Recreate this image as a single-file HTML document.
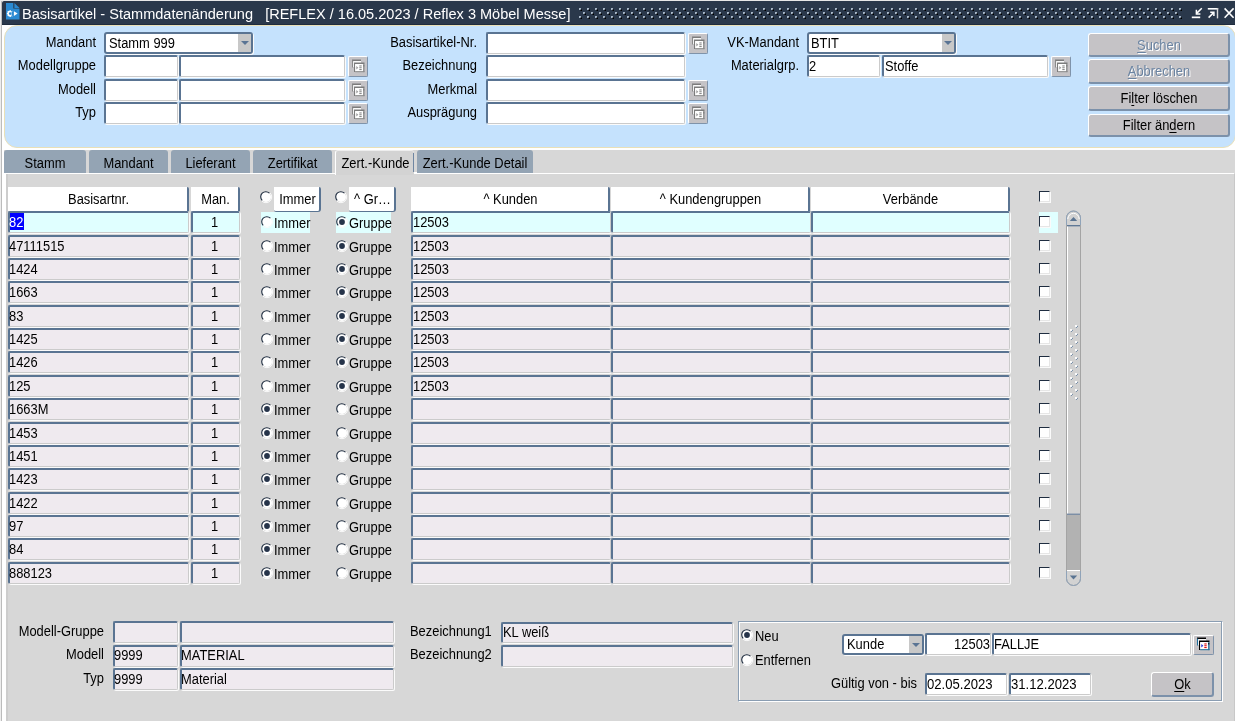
<!DOCTYPE html><html><head><meta charset="utf-8"><style>
html,body{margin:0;padding:0;}
body{width:1235px;height:721px;overflow:hidden;position:relative;background:#d6d6d6;font-family:"Liberation Sans",sans-serif;}
#root{position:absolute;left:0;top:0;width:1235px;height:721px;overflow:hidden;background:#fff;will-change:transform;}
.t{position:absolute;white-space:nowrap;line-height:1;}
.b{position:absolute;box-sizing:border-box;}
u{text-decoration:underline;text-decoration-thickness:1px;text-underline-offset:1.5px;}
</style></head><body><div id="root">
<div class="b" style="left:0px;top:0px;width:1px;height:721px;background:#ededed;"></div>
<div class="b" style="left:1px;top:0px;width:1px;height:721px;background:#bcbcbc;"></div>
<div class="b" style="left:0px;top:0px;width:1235px;height:1px;background:#e8e8e8;"></div>
<div class="b" style="left:2px;top:1px;width:1233px;height:24px;background:#2a384b;border-top-left-radius:2px;border-bottom:1px solid #1f2c3e;"></div>
<svg class="b" style="left:6px;top:3px" width="14" height="17" viewBox="0 0 14 17">
<path d="M0 0 H7.3 V5.6 H13.5 V16.5 H0 Z" fill="#2a8ad2"/>
<path d="M8.4 0 L13.5 5 H8.4 Z" fill="#2a8ad2"/>
<circle cx="4.2" cy="10.6" r="2.1" stroke="#fff" stroke-width="1.5" fill="none"/>
<path d="M4.2 7.2 V8.3 M4.2 12.9 V14 M0.9 10.6 H2 M1.8 8.2 L2.6 9 M1.8 13 L2.6 12.2 M6.6 8.2 L5.8 9 M6.6 13 L5.8 12.2" stroke="#fff" stroke-width="1.3"/>
<rect x="5.6" y="8.3" width="1.6" height="4.6" fill="#2a8ad2"/>
<path d="M7.9 8.2 L11.6 10.6 L7.9 13 Z" fill="#fff"/>
</svg>
<div class="t" style="left:22.00px;transform-origin:0 0;top:6px;font-size:15.3px;color:#fff;transform:scaleX(0.95);">Basisartikel - Stammdatenänderung&nbsp;&nbsp; [REFLEX / 16.05.2023 / Reflex 3 Möbel Messe]</div>
<svg class="b" style="left:579px;top:8px" width="606" height="12">
<defs><pattern id="dp" x="0" y="0" width="8" height="8" patternUnits="userSpaceOnUse">
<rect x="0" y="0" width="2" height="2" fill="#a9b8c8"/><rect x="1.5" y="1.5" width="1.5" height="1.5" fill="#000"/>
<rect x="4" y="4" width="2" height="2" fill="#a9b8c8"/><rect x="5.5" y="5.5" width="1.5" height="1.5" fill="#000"/>
</pattern></defs><rect x="0" y="0" width="604" height="12" fill="url(#dp)"/></svg>
<svg class="b" style="left:1190px;top:6px" width="45" height="14" viewBox="0 0 45 14">
<rect x="1.8" y="10.5" width="8.4" height="1.7" fill="#fff"/>
<path d="M11.8 2.2 L6.6 7.4" stroke="#fff" stroke-width="1.5"/>
<path d="M6.4 3.8 V8 H10.4" stroke="#fff" stroke-width="1.5" fill="none"/>
<rect x="17.8" y="2" width="10.4" height="1.6" fill="#fff"/>
<rect x="26.8" y="2" width="1.4" height="10.4" fill="#d8d8d8"/>
<path d="M18.6 11.6 L23.6 6.6" stroke="#fff" stroke-width="1.5"/>
<path d="M20.2 6.3 H23.9 V10" stroke="#fff" stroke-width="1.5" fill="none"/>
<path d="M34.6 2.4 L43.6 11.8 M43.6 2.4 L34.6 11.8" stroke="#fff" stroke-width="1.6"/>
</svg>
<div class="b" style="left:4px;top:25px;width:1232px;height:123px;background:#c5e2fd;border:1px solid #e9e0b8;border-radius:13px;"></div>
<div class="t" style="left:-24.00px;width:120px;text-align:right;transform-origin:100% 0;top:36px;font-size:13.8px;color:#000;transform:scaleX(0.935);">Mandant</div>
<div class="t" style="left:-24.00px;width:120px;text-align:right;transform-origin:100% 0;top:59px;font-size:13.8px;color:#000;transform:scaleX(0.935);">Modellgruppe</div>
<div class="t" style="left:-24.00px;width:120px;text-align:right;transform-origin:100% 0;top:83px;font-size:13.8px;color:#000;transform:scaleX(0.935);">Modell</div>
<div class="t" style="left:-24.00px;width:120px;text-align:right;transform-origin:100% 0;top:106px;font-size:13.8px;color:#000;transform:scaleX(0.935);">Typ</div>
<div class="b" style="left:104px;top:32px;width:149px;height:22px;background:#fff;border:2px solid #5a7492;border-radius:3px;box-shadow:1px 1px 0 #fbfbfb;"></div>
<div class="b" style="left:238px;top:34px;width:13px;height:18px;background:#c8c8c8;"></div>
<svg class="b" style="left:239.70px;top:40.00px" width="10" height="6"><path d="M1 1 L9 1 L5 5 Z" fill="#5a7494"/></svg>
<div class="t" style="left:108.50px;transform-origin:0 0;top:37px;font-size:13.8px;color:#000;transform:scaleX(0.935);">Stamm 999</div>
<div class="b" style="left:104px;top:55px;width:74px;height:22px;background:#fff;border-top:2px solid #5a7492;border-left:2px solid #5a7492;border-right:1px solid #cbcbcb;border-bottom:1px solid #cbcbcb;border-radius:2px;box-shadow:1px 1px 0 #fbfbfb;"></div>
<div class="b" style="left:179px;top:55px;width:166px;height:22px;background:#fff;border-top:2px solid #5a7492;border-left:2px solid #5a7492;border-right:1px solid #cbcbcb;border-bottom:1px solid #cbcbcb;border-radius:2px;box-shadow:1px 1px 0 #fbfbfb;"></div>
<div class="b" style="left:348px;top:56px;width:20px;height:21px;background:#c5c3c6;border-top:1px solid #fff;border-left:1px solid #fff;border-right:1px solid #7f93aa;border-bottom:1px solid #7f93aa;border-radius:2px;"></div>
<svg class="b" style="left:351.50px;top:59.00px" width="14" height="14" viewBox="0 0 14 14">
<rect x="0" y="0.5" width="9" height="1.6" fill="#7c7c7c"/>
<rect x="0" y="1.5" width="1.2" height="7" fill="#8a8a8a"/>
<rect x="1.2" y="2.1" width="7.8" height="6" fill="#fff"/>
<rect x="2" y="3.5" width="10.5" height="1.6" fill="#7c7c7c"/>
<rect x="2" y="4" width="1.2" height="9" fill="#7c7c7c"/>
<rect x="3.2" y="5.1" width="8" height="7.2" fill="#fff"/>
<rect x="11.2" y="5.1" width="1.3" height="8" fill="#8a8a8a"/>
<rect x="3.2" y="12.2" width="9.3" height="1" fill="#8a8a8a"/>
<rect x="11.3" y="6" width="1" height="1.5" fill="#7c7c7c"/>
<path d="M4.3 7 L6.3 8.7 L4.3 10.4 Z" fill="#9a9a9a"/>
<rect x="7.3" y="6.4" width="2.4" height="1.1" fill="#8a8a8a"/>
<rect x="7.3" y="8.2" width="2.4" height="1.1" fill="#8a8a8a"/>
<rect x="7.3" y="10" width="2.4" height="1.1" fill="#8a8a8a"/>
</svg>
<div class="b" style="left:104px;top:79px;width:74px;height:22px;background:#fff;border-top:2px solid #5a7492;border-left:2px solid #5a7492;border-right:1px solid #cbcbcb;border-bottom:1px solid #cbcbcb;border-radius:2px;box-shadow:1px 1px 0 #fbfbfb;"></div>
<div class="b" style="left:179px;top:79px;width:166px;height:22px;background:#fff;border-top:2px solid #5a7492;border-left:2px solid #5a7492;border-right:1px solid #cbcbcb;border-bottom:1px solid #cbcbcb;border-radius:2px;box-shadow:1px 1px 0 #fbfbfb;"></div>
<div class="b" style="left:348px;top:80px;width:20px;height:21px;background:#c5c3c6;border-top:1px solid #fff;border-left:1px solid #fff;border-right:1px solid #7f93aa;border-bottom:1px solid #7f93aa;border-radius:2px;"></div>
<svg class="b" style="left:351.50px;top:83.00px" width="14" height="14" viewBox="0 0 14 14">
<rect x="0" y="0.5" width="9" height="1.6" fill="#7c7c7c"/>
<rect x="0" y="1.5" width="1.2" height="7" fill="#8a8a8a"/>
<rect x="1.2" y="2.1" width="7.8" height="6" fill="#fff"/>
<rect x="2" y="3.5" width="10.5" height="1.6" fill="#7c7c7c"/>
<rect x="2" y="4" width="1.2" height="9" fill="#7c7c7c"/>
<rect x="3.2" y="5.1" width="8" height="7.2" fill="#fff"/>
<rect x="11.2" y="5.1" width="1.3" height="8" fill="#8a8a8a"/>
<rect x="3.2" y="12.2" width="9.3" height="1" fill="#8a8a8a"/>
<rect x="11.3" y="6" width="1" height="1.5" fill="#7c7c7c"/>
<path d="M4.3 7 L6.3 8.7 L4.3 10.4 Z" fill="#9a9a9a"/>
<rect x="7.3" y="6.4" width="2.4" height="1.1" fill="#8a8a8a"/>
<rect x="7.3" y="8.2" width="2.4" height="1.1" fill="#8a8a8a"/>
<rect x="7.3" y="10" width="2.4" height="1.1" fill="#8a8a8a"/>
</svg>
<div class="b" style="left:104px;top:102px;width:74px;height:22px;background:#fff;border-top:2px solid #5a7492;border-left:2px solid #5a7492;border-right:1px solid #cbcbcb;border-bottom:1px solid #cbcbcb;border-radius:2px;box-shadow:1px 1px 0 #fbfbfb;"></div>
<div class="b" style="left:179px;top:102px;width:166px;height:22px;background:#fff;border-top:2px solid #5a7492;border-left:2px solid #5a7492;border-right:1px solid #cbcbcb;border-bottom:1px solid #cbcbcb;border-radius:2px;box-shadow:1px 1px 0 #fbfbfb;"></div>
<div class="b" style="left:348px;top:103px;width:20px;height:21px;background:#c5c3c6;border-top:1px solid #fff;border-left:1px solid #fff;border-right:1px solid #7f93aa;border-bottom:1px solid #7f93aa;border-radius:2px;"></div>
<svg class="b" style="left:351.50px;top:106.00px" width="14" height="14" viewBox="0 0 14 14">
<rect x="0" y="0.5" width="9" height="1.6" fill="#7c7c7c"/>
<rect x="0" y="1.5" width="1.2" height="7" fill="#8a8a8a"/>
<rect x="1.2" y="2.1" width="7.8" height="6" fill="#fff"/>
<rect x="2" y="3.5" width="10.5" height="1.6" fill="#7c7c7c"/>
<rect x="2" y="4" width="1.2" height="9" fill="#7c7c7c"/>
<rect x="3.2" y="5.1" width="8" height="7.2" fill="#fff"/>
<rect x="11.2" y="5.1" width="1.3" height="8" fill="#8a8a8a"/>
<rect x="3.2" y="12.2" width="9.3" height="1" fill="#8a8a8a"/>
<rect x="11.3" y="6" width="1" height="1.5" fill="#7c7c7c"/>
<path d="M4.3 7 L6.3 8.7 L4.3 10.4 Z" fill="#9a9a9a"/>
<rect x="7.3" y="6.4" width="2.4" height="1.1" fill="#8a8a8a"/>
<rect x="7.3" y="8.2" width="2.4" height="1.1" fill="#8a8a8a"/>
<rect x="7.3" y="10" width="2.4" height="1.1" fill="#8a8a8a"/>
</svg>
<div class="t" style="left:357.00px;width:120px;text-align:right;transform-origin:100% 0;top:36px;font-size:13.8px;color:#000;transform:scaleX(0.935);">Basisartikel-Nr.</div>
<div class="t" style="left:357.00px;width:120px;text-align:right;transform-origin:100% 0;top:59px;font-size:13.8px;color:#000;transform:scaleX(0.935);">Bezeichnung</div>
<div class="t" style="left:357.00px;width:120px;text-align:right;transform-origin:100% 0;top:83px;font-size:13.8px;color:#000;transform:scaleX(0.935);">Merkmal</div>
<div class="t" style="left:357.00px;width:120px;text-align:right;transform-origin:100% 0;top:106px;font-size:13.8px;color:#000;transform:scaleX(0.935);">Ausprägung</div>
<div class="b" style="left:486px;top:32px;width:199px;height:22px;background:#fff;border-top:2px solid #5a7492;border-left:2px solid #5a7492;border-right:1px solid #cbcbcb;border-bottom:1px solid #cbcbcb;border-radius:2px;box-shadow:1px 1px 0 #fbfbfb;"></div>
<div class="b" style="left:486px;top:55px;width:199px;height:22px;background:#fff;border-top:2px solid #5a7492;border-left:2px solid #5a7492;border-right:1px solid #cbcbcb;border-bottom:1px solid #cbcbcb;border-radius:2px;box-shadow:1px 1px 0 #fbfbfb;"></div>
<div class="b" style="left:486px;top:79px;width:199px;height:22px;background:#fff;border-top:2px solid #5a7492;border-left:2px solid #5a7492;border-right:1px solid #cbcbcb;border-bottom:1px solid #cbcbcb;border-radius:2px;box-shadow:1px 1px 0 #fbfbfb;"></div>
<div class="b" style="left:486px;top:102px;width:199px;height:22px;background:#fff;border-top:2px solid #5a7492;border-left:2px solid #5a7492;border-right:1px solid #cbcbcb;border-bottom:1px solid #cbcbcb;border-radius:2px;box-shadow:1px 1px 0 #fbfbfb;"></div>
<div class="b" style="left:688px;top:33px;width:20px;height:21px;background:#c5c3c6;border-top:1px solid #fff;border-left:1px solid #fff;border-right:1px solid #7f93aa;border-bottom:1px solid #7f93aa;border-radius:2px;"></div>
<svg class="b" style="left:691.50px;top:36.00px" width="14" height="14" viewBox="0 0 14 14">
<rect x="0" y="0.5" width="9" height="1.6" fill="#7c7c7c"/>
<rect x="0" y="1.5" width="1.2" height="7" fill="#8a8a8a"/>
<rect x="1.2" y="2.1" width="7.8" height="6" fill="#fff"/>
<rect x="2" y="3.5" width="10.5" height="1.6" fill="#7c7c7c"/>
<rect x="2" y="4" width="1.2" height="9" fill="#7c7c7c"/>
<rect x="3.2" y="5.1" width="8" height="7.2" fill="#fff"/>
<rect x="11.2" y="5.1" width="1.3" height="8" fill="#8a8a8a"/>
<rect x="3.2" y="12.2" width="9.3" height="1" fill="#8a8a8a"/>
<rect x="11.3" y="6" width="1" height="1.5" fill="#7c7c7c"/>
<path d="M4.3 7 L6.3 8.7 L4.3 10.4 Z" fill="#9a9a9a"/>
<rect x="7.3" y="6.4" width="2.4" height="1.1" fill="#8a8a8a"/>
<rect x="7.3" y="8.2" width="2.4" height="1.1" fill="#8a8a8a"/>
<rect x="7.3" y="10" width="2.4" height="1.1" fill="#8a8a8a"/>
</svg>
<div class="b" style="left:688px;top:80px;width:20px;height:21px;background:#c5c3c6;border-top:1px solid #fff;border-left:1px solid #fff;border-right:1px solid #7f93aa;border-bottom:1px solid #7f93aa;border-radius:2px;"></div>
<svg class="b" style="left:691.50px;top:83.00px" width="14" height="14" viewBox="0 0 14 14">
<rect x="0" y="0.5" width="9" height="1.6" fill="#7c7c7c"/>
<rect x="0" y="1.5" width="1.2" height="7" fill="#8a8a8a"/>
<rect x="1.2" y="2.1" width="7.8" height="6" fill="#fff"/>
<rect x="2" y="3.5" width="10.5" height="1.6" fill="#7c7c7c"/>
<rect x="2" y="4" width="1.2" height="9" fill="#7c7c7c"/>
<rect x="3.2" y="5.1" width="8" height="7.2" fill="#fff"/>
<rect x="11.2" y="5.1" width="1.3" height="8" fill="#8a8a8a"/>
<rect x="3.2" y="12.2" width="9.3" height="1" fill="#8a8a8a"/>
<rect x="11.3" y="6" width="1" height="1.5" fill="#7c7c7c"/>
<path d="M4.3 7 L6.3 8.7 L4.3 10.4 Z" fill="#9a9a9a"/>
<rect x="7.3" y="6.4" width="2.4" height="1.1" fill="#8a8a8a"/>
<rect x="7.3" y="8.2" width="2.4" height="1.1" fill="#8a8a8a"/>
<rect x="7.3" y="10" width="2.4" height="1.1" fill="#8a8a8a"/>
</svg>
<div class="b" style="left:688px;top:103px;width:20px;height:21px;background:#c5c3c6;border-top:1px solid #fff;border-left:1px solid #fff;border-right:1px solid #7f93aa;border-bottom:1px solid #7f93aa;border-radius:2px;"></div>
<svg class="b" style="left:691.50px;top:106.00px" width="14" height="14" viewBox="0 0 14 14">
<rect x="0" y="0.5" width="9" height="1.6" fill="#7c7c7c"/>
<rect x="0" y="1.5" width="1.2" height="7" fill="#8a8a8a"/>
<rect x="1.2" y="2.1" width="7.8" height="6" fill="#fff"/>
<rect x="2" y="3.5" width="10.5" height="1.6" fill="#7c7c7c"/>
<rect x="2" y="4" width="1.2" height="9" fill="#7c7c7c"/>
<rect x="3.2" y="5.1" width="8" height="7.2" fill="#fff"/>
<rect x="11.2" y="5.1" width="1.3" height="8" fill="#8a8a8a"/>
<rect x="3.2" y="12.2" width="9.3" height="1" fill="#8a8a8a"/>
<rect x="11.3" y="6" width="1" height="1.5" fill="#7c7c7c"/>
<path d="M4.3 7 L6.3 8.7 L4.3 10.4 Z" fill="#9a9a9a"/>
<rect x="7.3" y="6.4" width="2.4" height="1.1" fill="#8a8a8a"/>
<rect x="7.3" y="8.2" width="2.4" height="1.1" fill="#8a8a8a"/>
<rect x="7.3" y="10" width="2.4" height="1.1" fill="#8a8a8a"/>
</svg>
<div class="t" style="left:678.80px;width:120px;text-align:right;transform-origin:100% 0;top:36px;font-size:13.8px;color:#000;transform:scaleX(0.935);">VK-Mandant</div>
<div class="t" style="left:678.80px;width:120px;text-align:right;transform-origin:100% 0;top:59px;font-size:13.8px;color:#000;transform:scaleX(0.935);">Materialgrp.</div>
<div class="b" style="left:807px;top:32px;width:149px;height:22px;background:#fff;border:2px solid #5a7492;border-radius:3px;box-shadow:1px 1px 0 #fbfbfb;"></div>
<div class="b" style="left:942px;top:34px;width:12px;height:18px;background:#c8c8c8;"></div>
<svg class="b" style="left:943.20px;top:40.00px" width="10" height="6"><path d="M1 1 L9 1 L5 5 Z" fill="#5a7494"/></svg>
<div class="t" style="left:811.00px;transform-origin:0 0;top:37px;font-size:13.8px;color:#000;transform:scaleX(0.935);">BTIT</div>
<div class="b" style="left:807px;top:55px;width:73px;height:22px;background:#fff;border-top:2px solid #5a7492;border-left:2px solid #5a7492;border-right:1px solid #cbcbcb;border-bottom:1px solid #cbcbcb;border-radius:2px;box-shadow:1px 1px 0 #fbfbfb;"></div>
<div class="t" style="left:808.50px;transform-origin:0 0;top:60px;font-size:13.8px;color:#000;transform:scaleX(0.935);">2</div>
<div class="b" style="left:882px;top:55px;width:166px;height:22px;background:#fff;border-top:2px solid #5a7492;border-left:2px solid #5a7492;border-right:1px solid #cbcbcb;border-bottom:1px solid #cbcbcb;border-radius:2px;box-shadow:1px 1px 0 #fbfbfb;"></div>
<div class="t" style="left:884.50px;transform-origin:0 0;top:60px;font-size:13.8px;color:#000;transform:scaleX(0.935);">Stoffe</div>
<div class="b" style="left:1051px;top:56px;width:20px;height:21px;background:#c5c3c6;border-top:1px solid #fff;border-left:1px solid #fff;border-right:1px solid #7f93aa;border-bottom:1px solid #7f93aa;border-radius:2px;"></div>
<svg class="b" style="left:1054.50px;top:59.00px" width="14" height="14" viewBox="0 0 14 14">
<rect x="0" y="0.5" width="9" height="1.6" fill="#7c7c7c"/>
<rect x="0" y="1.5" width="1.2" height="7" fill="#8a8a8a"/>
<rect x="1.2" y="2.1" width="7.8" height="6" fill="#fff"/>
<rect x="2" y="3.5" width="10.5" height="1.6" fill="#7c7c7c"/>
<rect x="2" y="4" width="1.2" height="9" fill="#7c7c7c"/>
<rect x="3.2" y="5.1" width="8" height="7.2" fill="#fff"/>
<rect x="11.2" y="5.1" width="1.3" height="8" fill="#8a8a8a"/>
<rect x="3.2" y="12.2" width="9.3" height="1" fill="#8a8a8a"/>
<rect x="11.3" y="6" width="1" height="1.5" fill="#7c7c7c"/>
<path d="M4.3 7 L6.3 8.7 L4.3 10.4 Z" fill="#9a9a9a"/>
<rect x="7.3" y="6.4" width="2.4" height="1.1" fill="#8a8a8a"/>
<rect x="7.3" y="8.2" width="2.4" height="1.1" fill="#8a8a8a"/>
<rect x="7.3" y="10" width="2.4" height="1.1" fill="#8a8a8a"/>
</svg>
<div class="b" style="left:1088px;top:33px;width:142px;height:24px;background:#c5c3c6;border-top:1px solid #fff;border-left:1px solid #fff;border-right:2px solid #7c91aa;border-bottom:2px solid #7c91aa;border-radius:3px;"></div>
<div class="t" style="left:1089.00px;width:142.00px;text-align:center;transform-origin:50% 0;top:40px;font-size:13.8px;color:#fff;transform:scaleX(0.935);"><u>S</u>uchen</div>
<div class="t" style="left:1088.00px;width:142.00px;text-align:center;transform-origin:50% 0;top:39px;font-size:13.8px;color:#6b84a2;transform:scaleX(0.935);"><u>S</u>uchen</div>
<div class="b" style="left:1088px;top:59px;width:142px;height:25px;background:#c5c3c6;border-top:1px solid #fff;border-left:1px solid #fff;border-right:2px solid #7c91aa;border-bottom:2px solid #7c91aa;border-radius:3px;"></div>
<div class="t" style="left:1089.00px;width:142.00px;text-align:center;transform-origin:50% 0;top:66px;font-size:13.8px;color:#fff;transform:scaleX(0.935);"><u>A</u>bbrechen</div>
<div class="t" style="left:1088.00px;width:142.00px;text-align:center;transform-origin:50% 0;top:65px;font-size:13.8px;color:#6b84a2;transform:scaleX(0.935);"><u>A</u>bbrechen</div>
<div class="b" style="left:1088px;top:86px;width:142px;height:25px;background:#c5c3c6;border-top:1px solid #fff;border-left:1px solid #fff;border-right:2px solid #7c91aa;border-bottom:2px solid #7c91aa;border-radius:3px;"></div>
<div class="t" style="left:1088.00px;width:142.00px;text-align:center;transform-origin:50% 0;top:92px;font-size:13.8px;color:#000;transform:scaleX(0.935);">Fi<u>l</u>ter löschen</div>
<div class="b" style="left:1088px;top:114px;width:142px;height:23px;background:#c5c3c6;border-top:1px solid #fff;border-left:1px solid #fff;border-right:2px solid #7c91aa;border-bottom:2px solid #7c91aa;border-radius:3px;"></div>
<div class="t" style="left:1088.00px;width:142.00px;text-align:center;transform-origin:50% 0;top:119px;font-size:13.8px;color:#000;transform:scaleX(0.935);">Filter än<u>d</u>ern</div>
<div class="b" style="left:4px;top:150px;width:1231px;height:571px;background:#d7d7d7;"></div>
<div class="b" style="left:4px;top:173px;width:1230px;height:1px;background:#fff;"></div>
<div class="b" style="left:4px;top:173px;width:2px;height:548px;background:#fff;"></div>
<div class="b" style="left:6px;top:174px;width:2px;height:547px;background:#cdcdcd;"></div>
<div class="b" style="left:1234px;top:174px;width:1px;height:547px;background:#c8c8c8;"></div>
<div class="b" style="left:4px;top:150px;width:82px;height:23px;background:#94a4b4;border-radius:3px 3px 0 0;"></div>
<div class="t" style="left:4.00px;width:82.00px;text-align:center;transform-origin:50% 0;top:157px;font-size:13.8px;color:#000;transform:scaleX(0.935);">Stamm</div>
<div class="b" style="left:89px;top:150px;width:79px;height:23px;background:#94a4b4;border-radius:3px 3px 0 0;"></div>
<div class="t" style="left:89.00px;width:79.00px;text-align:center;transform-origin:50% 0;top:157px;font-size:13.8px;color:#000;transform:scaleX(0.935);">Mandant</div>
<div class="b" style="left:171px;top:150px;width:79px;height:23px;background:#94a4b4;border-radius:3px 3px 0 0;"></div>
<div class="t" style="left:171.00px;width:79.00px;text-align:center;transform-origin:50% 0;top:157px;font-size:13.8px;color:#000;transform:scaleX(0.935);">Lieferant</div>
<div class="b" style="left:253px;top:150px;width:79px;height:23px;background:#94a4b4;border-radius:3px 3px 0 0;"></div>
<div class="t" style="left:253.00px;width:79.00px;text-align:center;transform-origin:50% 0;top:157px;font-size:13.8px;color:#000;transform:scaleX(0.935);">Zertifikat</div>
<div class="b" style="left:335px;top:150px;width:79px;height:25px;background:#d3d3d3;border-left:1px solid #fff;border-top:1px solid #eeeeee;border-radius:3px 3px 0 0;"></div>
<div class="b" style="left:413px;top:153px;width:1px;height:19px;background:#6f86a2;"></div>
<div class="b" style="left:414px;top:172px;width:3px;height:2px;background:#fff;"></div>
<div class="t" style="left:335.50px;width:79.00px;text-align:center;transform-origin:50% 0;top:157px;font-size:13.8px;color:#000;transform:scaleX(0.935);">Zert.-Kunde</div>
<div class="b" style="left:417px;top:150px;width:116px;height:23px;background:#94a4b4;border-radius:3px 3px 0 0;"></div>
<div class="t" style="left:417.00px;width:116.00px;text-align:center;transform-origin:50% 0;top:157px;font-size:13.8px;color:#000;transform:scaleX(0.935);">Zert.-Kunde Detail</div>
<div class="b" style="left:8px;top:187px;width:181px;height:24px;background:#fff;border-right:2px solid #5a7492;border-bottom:0;border-radius:0 2px 0 0;"></div>
<div class="t" style="left:8.00px;width:181.00px;text-align:center;transform-origin:50% 0;top:193px;font-size:13.8px;color:#000;transform:scaleX(0.935);">Basisartnr.</div>
<div class="b" style="left:191px;top:187px;width:49px;height:24px;background:#fff;border-right:2px solid #5a7492;border-bottom:0;border-radius:0 2px 0 0;"></div>
<div class="t" style="left:191.00px;width:49.00px;text-align:center;transform-origin:50% 0;top:193px;font-size:13.8px;color:#000;transform:scaleX(0.935);">Man.</div>
<svg class="b" style="left:259.00px;top:190.00px" width="14" height="14" viewBox="0 0 14 14">
<circle cx="7" cy="7" r="5" fill="#fff"/>
<path d="M11.1 2.9 A5.8 5.8 0 0 1 2.9 11.1" stroke="#fafafa" stroke-width="1" fill="none"/>
<path d="M3.2 10.4 A5 5 0 0 1 10.4 3.2" stroke="#1f2d40" stroke-width="1.1" fill="none"/>

</svg>
<div class="b" style="left:274px;top:187px;width:47px;height:25px;background:#fff;border-right:2px solid #5a7492;border-bottom:1px solid #5a7492;border-radius:0 2px 3px 2px;"></div>
<div class="t" style="left:274.00px;width:47.00px;text-align:center;transform-origin:50% 0;top:193px;font-size:13.8px;color:#000;transform:scaleX(0.935);">Immer</div>
<svg class="b" style="left:334.00px;top:190.00px" width="14" height="14" viewBox="0 0 14 14">
<circle cx="7" cy="7" r="5" fill="#fff"/>
<path d="M11.1 2.9 A5.8 5.8 0 0 1 2.9 11.1" stroke="#fafafa" stroke-width="1" fill="none"/>
<path d="M3.2 10.4 A5 5 0 0 1 10.4 3.2" stroke="#1f2d40" stroke-width="1.1" fill="none"/>

</svg>
<div class="b" style="left:349px;top:187px;width:47px;height:25px;background:#fff;border-right:2px solid #5a7492;border-bottom:1px solid #5a7492;border-radius:0 2px 3px 2px;"></div>
<div class="t" style="left:349.00px;width:47.00px;text-align:center;transform-origin:50% 0;top:193px;font-size:13.8px;color:#000;transform:scaleX(0.935);">^ Gr…</div>
<div class="b" style="left:411px;top:187px;width:199px;height:24px;background:#fff;border-right:2px solid #5a7492;border-bottom:0;border-radius:0 2px 0 0;"></div>
<div class="t" style="left:411.00px;width:199.00px;text-align:center;transform-origin:50% 0;top:193px;font-size:13.8px;color:#000;transform:scaleX(0.935);">^ Kunden</div>
<div class="b" style="left:611px;top:187px;width:199px;height:24px;background:#fff;border-right:2px solid #5a7492;border-bottom:0;border-radius:0 2px 0 0;"></div>
<div class="t" style="left:611.00px;width:199.00px;text-align:center;transform-origin:50% 0;top:193px;font-size:13.8px;color:#000;transform:scaleX(0.935);">^ Kundengruppen</div>
<div class="b" style="left:811px;top:187px;width:199px;height:24px;background:#fff;border-right:2px solid #5a7492;border-bottom:0;border-radius:0 2px 0 0;"></div>
<div class="t" style="left:811.00px;width:199.00px;text-align:center;transform-origin:50% 0;top:193px;font-size:13.8px;color:#000;transform:scaleX(0.935);">Verbände</div>
<div class="b" style="left:1039px;top:191px;width:11px;height:11px;background:#fff;border-top:1px solid #1f2d40;border-left:1px solid #1f2d40;border-right:1px solid #e6e6e6;border-bottom:1px solid #e6e6e6;box-shadow:1px 1px 0 #fafafa;"></div>
<div class="b" style="left:261px;top:212px;width:49px;height:21px;background:#e0ffff;"></div>
<div class="b" style="left:336px;top:212px;width:55px;height:21px;background:#e0ffff;"></div>
<div class="b" style="left:1039px;top:212px;width:19px;height:21px;background:#e0ffff;"></div>
<div class="b" style="left:8px;top:211px;width:181px;height:22px;background:#e0ffff;border-top:2px solid #5a7492;border-left:2px solid #5a7492;border-right:1px solid #cbcbcb;border-bottom:1px solid #cbcbcb;border-radius:2px;box-shadow:1px 1px 0 #fbfbfb;"></div>
<div class="b" style="left:10px;top:213px;width:14px;height:17px;background:#0000ff;"></div>
<div class="t" style="left:9.30px;transform-origin:0 0;top:216px;font-size:13.8px;color:#fff;transform:scaleX(0.935);">82</div>
<div class="b" style="left:191px;top:211px;width:49px;height:22px;background:#e0ffff;border-top:2px solid #5a7492;border-left:2px solid #5a7492;border-right:1px solid #cbcbcb;border-bottom:1px solid #cbcbcb;border-radius:2px;box-shadow:1px 1px 0 #fbfbfb;"></div>
<div class="t" style="left:189.50px;width:49.00px;text-align:center;transform-origin:50% 0;top:216px;font-size:13.8px;color:#000;transform:scaleX(0.935);">1</div>
<svg class="b" style="left:259.50px;top:215.30px" width="14" height="14" viewBox="0 0 14 14">
<circle cx="7" cy="7" r="5" fill="#fff"/>
<path d="M11.1 2.9 A5.8 5.8 0 0 1 2.9 11.1" stroke="#fafafa" stroke-width="1" fill="none"/>
<path d="M3.2 10.4 A5 5 0 0 1 10.4 3.2" stroke="#1f2d40" stroke-width="1.1" fill="none"/>

</svg>
<div class="t" style="left:274.20px;transform-origin:0 0;top:217px;font-size:13.8px;color:#000;transform:scaleX(0.935);">Immer</div>
<svg class="b" style="left:334.50px;top:215.30px" width="14" height="14" viewBox="0 0 14 14">
<circle cx="7" cy="7" r="5" fill="#fff"/>
<path d="M11.1 2.9 A5.8 5.8 0 0 1 2.9 11.1" stroke="#fafafa" stroke-width="1" fill="none"/>
<path d="M3.2 10.4 A5 5 0 0 1 10.4 3.2" stroke="#1f2d40" stroke-width="1.1" fill="none"/>
<circle cx="7" cy="7" r="2.9" fill="#26344a"/>
</svg>
<div class="t" style="left:349.00px;transform-origin:0 0;top:217px;font-size:13.8px;color:#000;transform:scaleX(0.935);">Gruppe</div>
<div class="b" style="left:411px;top:211px;width:200px;height:22px;background:#e0ffff;border-top:2px solid #5a7492;border-left:2px solid #5a7492;border-right:1px solid #cbcbcb;border-bottom:1px solid #cbcbcb;border-radius:2px;box-shadow:1px 1px 0 #fbfbfb;"></div>
<div class="t" style="left:412.50px;transform-origin:0 0;top:216px;font-size:13.8px;color:#000;transform:scaleX(0.935);">12503</div>
<div class="b" style="left:611px;top:211px;width:200px;height:22px;background:#e0ffff;border-top:2px solid #5a7492;border-left:2px solid #5a7492;border-right:1px solid #cbcbcb;border-bottom:1px solid #cbcbcb;border-radius:2px;box-shadow:1px 1px 0 #fbfbfb;"></div>
<div class="b" style="left:811px;top:211px;width:199px;height:22px;background:#e0ffff;border-top:2px solid #5a7492;border-left:2px solid #5a7492;border-right:1px solid #cbcbcb;border-bottom:1px solid #cbcbcb;border-radius:2px;box-shadow:1px 1px 0 #fbfbfb;"></div>
<div class="b" style="left:1039px;top:216px;width:11px;height:11px;background:#fff;border-top:1px solid #1f2d40;border-left:1px solid #1f2d40;border-right:1px solid #e6e6e6;border-bottom:1px solid #e6e6e6;box-shadow:1px 1px 0 #fafafa;"></div>
<div class="b" style="left:8px;top:235px;width:181px;height:22px;background:#efeaef;border-top:2px solid #5a7492;border-left:2px solid #5a7492;border-right:1px solid #cbcbcb;border-bottom:1px solid #cbcbcb;border-radius:2px;box-shadow:1px 1px 0 #fbfbfb;"></div>
<div class="t" style="left:9.30px;transform-origin:0 0;top:240px;font-size:13.8px;color:#000;transform:scaleX(0.935);">47111515</div>
<div class="b" style="left:191px;top:235px;width:49px;height:22px;background:#efeaef;border-top:2px solid #5a7492;border-left:2px solid #5a7492;border-right:1px solid #cbcbcb;border-bottom:1px solid #cbcbcb;border-radius:2px;box-shadow:1px 1px 0 #fbfbfb;"></div>
<div class="t" style="left:189.50px;width:49.00px;text-align:center;transform-origin:50% 0;top:240px;font-size:13.8px;color:#000;transform:scaleX(0.935);">1</div>
<svg class="b" style="left:259.50px;top:239.30px" width="14" height="14" viewBox="0 0 14 14">
<circle cx="7" cy="7" r="5" fill="#fff"/>
<path d="M11.1 2.9 A5.8 5.8 0 0 1 2.9 11.1" stroke="#fafafa" stroke-width="1" fill="none"/>
<path d="M3.2 10.4 A5 5 0 0 1 10.4 3.2" stroke="#1f2d40" stroke-width="1.1" fill="none"/>

</svg>
<div class="t" style="left:274.20px;transform-origin:0 0;top:241px;font-size:13.8px;color:#000;transform:scaleX(0.935);">Immer</div>
<svg class="b" style="left:334.50px;top:239.30px" width="14" height="14" viewBox="0 0 14 14">
<circle cx="7" cy="7" r="5" fill="#fff"/>
<path d="M11.1 2.9 A5.8 5.8 0 0 1 2.9 11.1" stroke="#fafafa" stroke-width="1" fill="none"/>
<path d="M3.2 10.4 A5 5 0 0 1 10.4 3.2" stroke="#1f2d40" stroke-width="1.1" fill="none"/>
<circle cx="7" cy="7" r="2.9" fill="#26344a"/>
</svg>
<div class="t" style="left:349.00px;transform-origin:0 0;top:241px;font-size:13.8px;color:#000;transform:scaleX(0.935);">Gruppe</div>
<div class="b" style="left:411px;top:235px;width:200px;height:22px;background:#efeaef;border-top:2px solid #5a7492;border-left:2px solid #5a7492;border-right:1px solid #cbcbcb;border-bottom:1px solid #cbcbcb;border-radius:2px;box-shadow:1px 1px 0 #fbfbfb;"></div>
<div class="t" style="left:412.50px;transform-origin:0 0;top:240px;font-size:13.8px;color:#000;transform:scaleX(0.935);">12503</div>
<div class="b" style="left:611px;top:235px;width:200px;height:22px;background:#efeaef;border-top:2px solid #5a7492;border-left:2px solid #5a7492;border-right:1px solid #cbcbcb;border-bottom:1px solid #cbcbcb;border-radius:2px;box-shadow:1px 1px 0 #fbfbfb;"></div>
<div class="b" style="left:811px;top:235px;width:199px;height:22px;background:#efeaef;border-top:2px solid #5a7492;border-left:2px solid #5a7492;border-right:1px solid #cbcbcb;border-bottom:1px solid #cbcbcb;border-radius:2px;box-shadow:1px 1px 0 #fbfbfb;"></div>
<div class="b" style="left:1039px;top:240px;width:11px;height:11px;background:#fff;border-top:1px solid #1f2d40;border-left:1px solid #1f2d40;border-right:1px solid #e6e6e6;border-bottom:1px solid #e6e6e6;box-shadow:1px 1px 0 #fafafa;"></div>
<div class="b" style="left:8px;top:258px;width:181px;height:22px;background:#efeaef;border-top:2px solid #5a7492;border-left:2px solid #5a7492;border-right:1px solid #cbcbcb;border-bottom:1px solid #cbcbcb;border-radius:2px;box-shadow:1px 1px 0 #fbfbfb;"></div>
<div class="t" style="left:9.30px;transform-origin:0 0;top:263px;font-size:13.8px;color:#000;transform:scaleX(0.935);">1424</div>
<div class="b" style="left:191px;top:258px;width:49px;height:22px;background:#efeaef;border-top:2px solid #5a7492;border-left:2px solid #5a7492;border-right:1px solid #cbcbcb;border-bottom:1px solid #cbcbcb;border-radius:2px;box-shadow:1px 1px 0 #fbfbfb;"></div>
<div class="t" style="left:189.50px;width:49.00px;text-align:center;transform-origin:50% 0;top:263px;font-size:13.8px;color:#000;transform:scaleX(0.935);">1</div>
<svg class="b" style="left:259.50px;top:262.30px" width="14" height="14" viewBox="0 0 14 14">
<circle cx="7" cy="7" r="5" fill="#fff"/>
<path d="M11.1 2.9 A5.8 5.8 0 0 1 2.9 11.1" stroke="#fafafa" stroke-width="1" fill="none"/>
<path d="M3.2 10.4 A5 5 0 0 1 10.4 3.2" stroke="#1f2d40" stroke-width="1.1" fill="none"/>

</svg>
<div class="t" style="left:274.20px;transform-origin:0 0;top:264px;font-size:13.8px;color:#000;transform:scaleX(0.935);">Immer</div>
<svg class="b" style="left:334.50px;top:262.30px" width="14" height="14" viewBox="0 0 14 14">
<circle cx="7" cy="7" r="5" fill="#fff"/>
<path d="M11.1 2.9 A5.8 5.8 0 0 1 2.9 11.1" stroke="#fafafa" stroke-width="1" fill="none"/>
<path d="M3.2 10.4 A5 5 0 0 1 10.4 3.2" stroke="#1f2d40" stroke-width="1.1" fill="none"/>
<circle cx="7" cy="7" r="2.9" fill="#26344a"/>
</svg>
<div class="t" style="left:349.00px;transform-origin:0 0;top:264px;font-size:13.8px;color:#000;transform:scaleX(0.935);">Gruppe</div>
<div class="b" style="left:411px;top:258px;width:200px;height:22px;background:#efeaef;border-top:2px solid #5a7492;border-left:2px solid #5a7492;border-right:1px solid #cbcbcb;border-bottom:1px solid #cbcbcb;border-radius:2px;box-shadow:1px 1px 0 #fbfbfb;"></div>
<div class="t" style="left:412.50px;transform-origin:0 0;top:263px;font-size:13.8px;color:#000;transform:scaleX(0.935);">12503</div>
<div class="b" style="left:611px;top:258px;width:200px;height:22px;background:#efeaef;border-top:2px solid #5a7492;border-left:2px solid #5a7492;border-right:1px solid #cbcbcb;border-bottom:1px solid #cbcbcb;border-radius:2px;box-shadow:1px 1px 0 #fbfbfb;"></div>
<div class="b" style="left:811px;top:258px;width:199px;height:22px;background:#efeaef;border-top:2px solid #5a7492;border-left:2px solid #5a7492;border-right:1px solid #cbcbcb;border-bottom:1px solid #cbcbcb;border-radius:2px;box-shadow:1px 1px 0 #fbfbfb;"></div>
<div class="b" style="left:1039px;top:263px;width:11px;height:11px;background:#fff;border-top:1px solid #1f2d40;border-left:1px solid #1f2d40;border-right:1px solid #e6e6e6;border-bottom:1px solid #e6e6e6;box-shadow:1px 1px 0 #fafafa;"></div>
<div class="b" style="left:8px;top:281px;width:181px;height:22px;background:#efeaef;border-top:2px solid #5a7492;border-left:2px solid #5a7492;border-right:1px solid #cbcbcb;border-bottom:1px solid #cbcbcb;border-radius:2px;box-shadow:1px 1px 0 #fbfbfb;"></div>
<div class="t" style="left:9.30px;transform-origin:0 0;top:286px;font-size:13.8px;color:#000;transform:scaleX(0.935);">1663</div>
<div class="b" style="left:191px;top:281px;width:49px;height:22px;background:#efeaef;border-top:2px solid #5a7492;border-left:2px solid #5a7492;border-right:1px solid #cbcbcb;border-bottom:1px solid #cbcbcb;border-radius:2px;box-shadow:1px 1px 0 #fbfbfb;"></div>
<div class="t" style="left:189.50px;width:49.00px;text-align:center;transform-origin:50% 0;top:286px;font-size:13.8px;color:#000;transform:scaleX(0.935);">1</div>
<svg class="b" style="left:259.50px;top:285.30px" width="14" height="14" viewBox="0 0 14 14">
<circle cx="7" cy="7" r="5" fill="#fff"/>
<path d="M11.1 2.9 A5.8 5.8 0 0 1 2.9 11.1" stroke="#fafafa" stroke-width="1" fill="none"/>
<path d="M3.2 10.4 A5 5 0 0 1 10.4 3.2" stroke="#1f2d40" stroke-width="1.1" fill="none"/>

</svg>
<div class="t" style="left:274.20px;transform-origin:0 0;top:287px;font-size:13.8px;color:#000;transform:scaleX(0.935);">Immer</div>
<svg class="b" style="left:334.50px;top:285.30px" width="14" height="14" viewBox="0 0 14 14">
<circle cx="7" cy="7" r="5" fill="#fff"/>
<path d="M11.1 2.9 A5.8 5.8 0 0 1 2.9 11.1" stroke="#fafafa" stroke-width="1" fill="none"/>
<path d="M3.2 10.4 A5 5 0 0 1 10.4 3.2" stroke="#1f2d40" stroke-width="1.1" fill="none"/>
<circle cx="7" cy="7" r="2.9" fill="#26344a"/>
</svg>
<div class="t" style="left:349.00px;transform-origin:0 0;top:287px;font-size:13.8px;color:#000;transform:scaleX(0.935);">Gruppe</div>
<div class="b" style="left:411px;top:281px;width:200px;height:22px;background:#efeaef;border-top:2px solid #5a7492;border-left:2px solid #5a7492;border-right:1px solid #cbcbcb;border-bottom:1px solid #cbcbcb;border-radius:2px;box-shadow:1px 1px 0 #fbfbfb;"></div>
<div class="t" style="left:412.50px;transform-origin:0 0;top:286px;font-size:13.8px;color:#000;transform:scaleX(0.935);">12503</div>
<div class="b" style="left:611px;top:281px;width:200px;height:22px;background:#efeaef;border-top:2px solid #5a7492;border-left:2px solid #5a7492;border-right:1px solid #cbcbcb;border-bottom:1px solid #cbcbcb;border-radius:2px;box-shadow:1px 1px 0 #fbfbfb;"></div>
<div class="b" style="left:811px;top:281px;width:199px;height:22px;background:#efeaef;border-top:2px solid #5a7492;border-left:2px solid #5a7492;border-right:1px solid #cbcbcb;border-bottom:1px solid #cbcbcb;border-radius:2px;box-shadow:1px 1px 0 #fbfbfb;"></div>
<div class="b" style="left:1039px;top:286px;width:11px;height:11px;background:#fff;border-top:1px solid #1f2d40;border-left:1px solid #1f2d40;border-right:1px solid #e6e6e6;border-bottom:1px solid #e6e6e6;box-shadow:1px 1px 0 #fafafa;"></div>
<div class="b" style="left:8px;top:305px;width:181px;height:22px;background:#efeaef;border-top:2px solid #5a7492;border-left:2px solid #5a7492;border-right:1px solid #cbcbcb;border-bottom:1px solid #cbcbcb;border-radius:2px;box-shadow:1px 1px 0 #fbfbfb;"></div>
<div class="t" style="left:9.30px;transform-origin:0 0;top:310px;font-size:13.8px;color:#000;transform:scaleX(0.935);">83</div>
<div class="b" style="left:191px;top:305px;width:49px;height:22px;background:#efeaef;border-top:2px solid #5a7492;border-left:2px solid #5a7492;border-right:1px solid #cbcbcb;border-bottom:1px solid #cbcbcb;border-radius:2px;box-shadow:1px 1px 0 #fbfbfb;"></div>
<div class="t" style="left:189.50px;width:49.00px;text-align:center;transform-origin:50% 0;top:310px;font-size:13.8px;color:#000;transform:scaleX(0.935);">1</div>
<svg class="b" style="left:259.50px;top:309.30px" width="14" height="14" viewBox="0 0 14 14">
<circle cx="7" cy="7" r="5" fill="#fff"/>
<path d="M11.1 2.9 A5.8 5.8 0 0 1 2.9 11.1" stroke="#fafafa" stroke-width="1" fill="none"/>
<path d="M3.2 10.4 A5 5 0 0 1 10.4 3.2" stroke="#1f2d40" stroke-width="1.1" fill="none"/>

</svg>
<div class="t" style="left:274.20px;transform-origin:0 0;top:311px;font-size:13.8px;color:#000;transform:scaleX(0.935);">Immer</div>
<svg class="b" style="left:334.50px;top:309.30px" width="14" height="14" viewBox="0 0 14 14">
<circle cx="7" cy="7" r="5" fill="#fff"/>
<path d="M11.1 2.9 A5.8 5.8 0 0 1 2.9 11.1" stroke="#fafafa" stroke-width="1" fill="none"/>
<path d="M3.2 10.4 A5 5 0 0 1 10.4 3.2" stroke="#1f2d40" stroke-width="1.1" fill="none"/>
<circle cx="7" cy="7" r="2.9" fill="#26344a"/>
</svg>
<div class="t" style="left:349.00px;transform-origin:0 0;top:311px;font-size:13.8px;color:#000;transform:scaleX(0.935);">Gruppe</div>
<div class="b" style="left:411px;top:305px;width:200px;height:22px;background:#efeaef;border-top:2px solid #5a7492;border-left:2px solid #5a7492;border-right:1px solid #cbcbcb;border-bottom:1px solid #cbcbcb;border-radius:2px;box-shadow:1px 1px 0 #fbfbfb;"></div>
<div class="t" style="left:412.50px;transform-origin:0 0;top:310px;font-size:13.8px;color:#000;transform:scaleX(0.935);">12503</div>
<div class="b" style="left:611px;top:305px;width:200px;height:22px;background:#efeaef;border-top:2px solid #5a7492;border-left:2px solid #5a7492;border-right:1px solid #cbcbcb;border-bottom:1px solid #cbcbcb;border-radius:2px;box-shadow:1px 1px 0 #fbfbfb;"></div>
<div class="b" style="left:811px;top:305px;width:199px;height:22px;background:#efeaef;border-top:2px solid #5a7492;border-left:2px solid #5a7492;border-right:1px solid #cbcbcb;border-bottom:1px solid #cbcbcb;border-radius:2px;box-shadow:1px 1px 0 #fbfbfb;"></div>
<div class="b" style="left:1039px;top:310px;width:11px;height:11px;background:#fff;border-top:1px solid #1f2d40;border-left:1px solid #1f2d40;border-right:1px solid #e6e6e6;border-bottom:1px solid #e6e6e6;box-shadow:1px 1px 0 #fafafa;"></div>
<div class="b" style="left:8px;top:328px;width:181px;height:22px;background:#efeaef;border-top:2px solid #5a7492;border-left:2px solid #5a7492;border-right:1px solid #cbcbcb;border-bottom:1px solid #cbcbcb;border-radius:2px;box-shadow:1px 1px 0 #fbfbfb;"></div>
<div class="t" style="left:9.30px;transform-origin:0 0;top:333px;font-size:13.8px;color:#000;transform:scaleX(0.935);">1425</div>
<div class="b" style="left:191px;top:328px;width:49px;height:22px;background:#efeaef;border-top:2px solid #5a7492;border-left:2px solid #5a7492;border-right:1px solid #cbcbcb;border-bottom:1px solid #cbcbcb;border-radius:2px;box-shadow:1px 1px 0 #fbfbfb;"></div>
<div class="t" style="left:189.50px;width:49.00px;text-align:center;transform-origin:50% 0;top:333px;font-size:13.8px;color:#000;transform:scaleX(0.935);">1</div>
<svg class="b" style="left:259.50px;top:332.30px" width="14" height="14" viewBox="0 0 14 14">
<circle cx="7" cy="7" r="5" fill="#fff"/>
<path d="M11.1 2.9 A5.8 5.8 0 0 1 2.9 11.1" stroke="#fafafa" stroke-width="1" fill="none"/>
<path d="M3.2 10.4 A5 5 0 0 1 10.4 3.2" stroke="#1f2d40" stroke-width="1.1" fill="none"/>

</svg>
<div class="t" style="left:274.20px;transform-origin:0 0;top:334px;font-size:13.8px;color:#000;transform:scaleX(0.935);">Immer</div>
<svg class="b" style="left:334.50px;top:332.30px" width="14" height="14" viewBox="0 0 14 14">
<circle cx="7" cy="7" r="5" fill="#fff"/>
<path d="M11.1 2.9 A5.8 5.8 0 0 1 2.9 11.1" stroke="#fafafa" stroke-width="1" fill="none"/>
<path d="M3.2 10.4 A5 5 0 0 1 10.4 3.2" stroke="#1f2d40" stroke-width="1.1" fill="none"/>
<circle cx="7" cy="7" r="2.9" fill="#26344a"/>
</svg>
<div class="t" style="left:349.00px;transform-origin:0 0;top:334px;font-size:13.8px;color:#000;transform:scaleX(0.935);">Gruppe</div>
<div class="b" style="left:411px;top:328px;width:200px;height:22px;background:#efeaef;border-top:2px solid #5a7492;border-left:2px solid #5a7492;border-right:1px solid #cbcbcb;border-bottom:1px solid #cbcbcb;border-radius:2px;box-shadow:1px 1px 0 #fbfbfb;"></div>
<div class="t" style="left:412.50px;transform-origin:0 0;top:333px;font-size:13.8px;color:#000;transform:scaleX(0.935);">12503</div>
<div class="b" style="left:611px;top:328px;width:200px;height:22px;background:#efeaef;border-top:2px solid #5a7492;border-left:2px solid #5a7492;border-right:1px solid #cbcbcb;border-bottom:1px solid #cbcbcb;border-radius:2px;box-shadow:1px 1px 0 #fbfbfb;"></div>
<div class="b" style="left:811px;top:328px;width:199px;height:22px;background:#efeaef;border-top:2px solid #5a7492;border-left:2px solid #5a7492;border-right:1px solid #cbcbcb;border-bottom:1px solid #cbcbcb;border-radius:2px;box-shadow:1px 1px 0 #fbfbfb;"></div>
<div class="b" style="left:1039px;top:333px;width:11px;height:11px;background:#fff;border-top:1px solid #1f2d40;border-left:1px solid #1f2d40;border-right:1px solid #e6e6e6;border-bottom:1px solid #e6e6e6;box-shadow:1px 1px 0 #fafafa;"></div>
<div class="b" style="left:8px;top:351px;width:181px;height:22px;background:#efeaef;border-top:2px solid #5a7492;border-left:2px solid #5a7492;border-right:1px solid #cbcbcb;border-bottom:1px solid #cbcbcb;border-radius:2px;box-shadow:1px 1px 0 #fbfbfb;"></div>
<div class="t" style="left:9.30px;transform-origin:0 0;top:356px;font-size:13.8px;color:#000;transform:scaleX(0.935);">1426</div>
<div class="b" style="left:191px;top:351px;width:49px;height:22px;background:#efeaef;border-top:2px solid #5a7492;border-left:2px solid #5a7492;border-right:1px solid #cbcbcb;border-bottom:1px solid #cbcbcb;border-radius:2px;box-shadow:1px 1px 0 #fbfbfb;"></div>
<div class="t" style="left:189.50px;width:49.00px;text-align:center;transform-origin:50% 0;top:356px;font-size:13.8px;color:#000;transform:scaleX(0.935);">1</div>
<svg class="b" style="left:259.50px;top:355.30px" width="14" height="14" viewBox="0 0 14 14">
<circle cx="7" cy="7" r="5" fill="#fff"/>
<path d="M11.1 2.9 A5.8 5.8 0 0 1 2.9 11.1" stroke="#fafafa" stroke-width="1" fill="none"/>
<path d="M3.2 10.4 A5 5 0 0 1 10.4 3.2" stroke="#1f2d40" stroke-width="1.1" fill="none"/>

</svg>
<div class="t" style="left:274.20px;transform-origin:0 0;top:357px;font-size:13.8px;color:#000;transform:scaleX(0.935);">Immer</div>
<svg class="b" style="left:334.50px;top:355.30px" width="14" height="14" viewBox="0 0 14 14">
<circle cx="7" cy="7" r="5" fill="#fff"/>
<path d="M11.1 2.9 A5.8 5.8 0 0 1 2.9 11.1" stroke="#fafafa" stroke-width="1" fill="none"/>
<path d="M3.2 10.4 A5 5 0 0 1 10.4 3.2" stroke="#1f2d40" stroke-width="1.1" fill="none"/>
<circle cx="7" cy="7" r="2.9" fill="#26344a"/>
</svg>
<div class="t" style="left:349.00px;transform-origin:0 0;top:357px;font-size:13.8px;color:#000;transform:scaleX(0.935);">Gruppe</div>
<div class="b" style="left:411px;top:351px;width:200px;height:22px;background:#efeaef;border-top:2px solid #5a7492;border-left:2px solid #5a7492;border-right:1px solid #cbcbcb;border-bottom:1px solid #cbcbcb;border-radius:2px;box-shadow:1px 1px 0 #fbfbfb;"></div>
<div class="t" style="left:412.50px;transform-origin:0 0;top:356px;font-size:13.8px;color:#000;transform:scaleX(0.935);">12503</div>
<div class="b" style="left:611px;top:351px;width:200px;height:22px;background:#efeaef;border-top:2px solid #5a7492;border-left:2px solid #5a7492;border-right:1px solid #cbcbcb;border-bottom:1px solid #cbcbcb;border-radius:2px;box-shadow:1px 1px 0 #fbfbfb;"></div>
<div class="b" style="left:811px;top:351px;width:199px;height:22px;background:#efeaef;border-top:2px solid #5a7492;border-left:2px solid #5a7492;border-right:1px solid #cbcbcb;border-bottom:1px solid #cbcbcb;border-radius:2px;box-shadow:1px 1px 0 #fbfbfb;"></div>
<div class="b" style="left:1039px;top:356px;width:11px;height:11px;background:#fff;border-top:1px solid #1f2d40;border-left:1px solid #1f2d40;border-right:1px solid #e6e6e6;border-bottom:1px solid #e6e6e6;box-shadow:1px 1px 0 #fafafa;"></div>
<div class="b" style="left:8px;top:375px;width:181px;height:22px;background:#efeaef;border-top:2px solid #5a7492;border-left:2px solid #5a7492;border-right:1px solid #cbcbcb;border-bottom:1px solid #cbcbcb;border-radius:2px;box-shadow:1px 1px 0 #fbfbfb;"></div>
<div class="t" style="left:9.30px;transform-origin:0 0;top:380px;font-size:13.8px;color:#000;transform:scaleX(0.935);">125</div>
<div class="b" style="left:191px;top:375px;width:49px;height:22px;background:#efeaef;border-top:2px solid #5a7492;border-left:2px solid #5a7492;border-right:1px solid #cbcbcb;border-bottom:1px solid #cbcbcb;border-radius:2px;box-shadow:1px 1px 0 #fbfbfb;"></div>
<div class="t" style="left:189.50px;width:49.00px;text-align:center;transform-origin:50% 0;top:380px;font-size:13.8px;color:#000;transform:scaleX(0.935);">1</div>
<svg class="b" style="left:259.50px;top:379.30px" width="14" height="14" viewBox="0 0 14 14">
<circle cx="7" cy="7" r="5" fill="#fff"/>
<path d="M11.1 2.9 A5.8 5.8 0 0 1 2.9 11.1" stroke="#fafafa" stroke-width="1" fill="none"/>
<path d="M3.2 10.4 A5 5 0 0 1 10.4 3.2" stroke="#1f2d40" stroke-width="1.1" fill="none"/>

</svg>
<div class="t" style="left:274.20px;transform-origin:0 0;top:381px;font-size:13.8px;color:#000;transform:scaleX(0.935);">Immer</div>
<svg class="b" style="left:334.50px;top:379.30px" width="14" height="14" viewBox="0 0 14 14">
<circle cx="7" cy="7" r="5" fill="#fff"/>
<path d="M11.1 2.9 A5.8 5.8 0 0 1 2.9 11.1" stroke="#fafafa" stroke-width="1" fill="none"/>
<path d="M3.2 10.4 A5 5 0 0 1 10.4 3.2" stroke="#1f2d40" stroke-width="1.1" fill="none"/>
<circle cx="7" cy="7" r="2.9" fill="#26344a"/>
</svg>
<div class="t" style="left:349.00px;transform-origin:0 0;top:381px;font-size:13.8px;color:#000;transform:scaleX(0.935);">Gruppe</div>
<div class="b" style="left:411px;top:375px;width:200px;height:22px;background:#efeaef;border-top:2px solid #5a7492;border-left:2px solid #5a7492;border-right:1px solid #cbcbcb;border-bottom:1px solid #cbcbcb;border-radius:2px;box-shadow:1px 1px 0 #fbfbfb;"></div>
<div class="t" style="left:412.50px;transform-origin:0 0;top:380px;font-size:13.8px;color:#000;transform:scaleX(0.935);">12503</div>
<div class="b" style="left:611px;top:375px;width:200px;height:22px;background:#efeaef;border-top:2px solid #5a7492;border-left:2px solid #5a7492;border-right:1px solid #cbcbcb;border-bottom:1px solid #cbcbcb;border-radius:2px;box-shadow:1px 1px 0 #fbfbfb;"></div>
<div class="b" style="left:811px;top:375px;width:199px;height:22px;background:#efeaef;border-top:2px solid #5a7492;border-left:2px solid #5a7492;border-right:1px solid #cbcbcb;border-bottom:1px solid #cbcbcb;border-radius:2px;box-shadow:1px 1px 0 #fbfbfb;"></div>
<div class="b" style="left:1039px;top:380px;width:11px;height:11px;background:#fff;border-top:1px solid #1f2d40;border-left:1px solid #1f2d40;border-right:1px solid #e6e6e6;border-bottom:1px solid #e6e6e6;box-shadow:1px 1px 0 #fafafa;"></div>
<div class="b" style="left:8px;top:398px;width:181px;height:22px;background:#efeaef;border-top:2px solid #5a7492;border-left:2px solid #5a7492;border-right:1px solid #cbcbcb;border-bottom:1px solid #cbcbcb;border-radius:2px;box-shadow:1px 1px 0 #fbfbfb;"></div>
<div class="t" style="left:9.30px;transform-origin:0 0;top:403px;font-size:13.8px;color:#000;transform:scaleX(0.935);">1663M</div>
<div class="b" style="left:191px;top:398px;width:49px;height:22px;background:#efeaef;border-top:2px solid #5a7492;border-left:2px solid #5a7492;border-right:1px solid #cbcbcb;border-bottom:1px solid #cbcbcb;border-radius:2px;box-shadow:1px 1px 0 #fbfbfb;"></div>
<div class="t" style="left:189.50px;width:49.00px;text-align:center;transform-origin:50% 0;top:403px;font-size:13.8px;color:#000;transform:scaleX(0.935);">1</div>
<svg class="b" style="left:259.50px;top:402.30px" width="14" height="14" viewBox="0 0 14 14">
<circle cx="7" cy="7" r="5" fill="#fff"/>
<path d="M11.1 2.9 A5.8 5.8 0 0 1 2.9 11.1" stroke="#fafafa" stroke-width="1" fill="none"/>
<path d="M3.2 10.4 A5 5 0 0 1 10.4 3.2" stroke="#1f2d40" stroke-width="1.1" fill="none"/>
<circle cx="7" cy="7" r="2.9" fill="#26344a"/>
</svg>
<div class="t" style="left:274.20px;transform-origin:0 0;top:404px;font-size:13.8px;color:#000;transform:scaleX(0.935);">Immer</div>
<svg class="b" style="left:334.50px;top:402.30px" width="14" height="14" viewBox="0 0 14 14">
<circle cx="7" cy="7" r="5" fill="#fff"/>
<path d="M11.1 2.9 A5.8 5.8 0 0 1 2.9 11.1" stroke="#fafafa" stroke-width="1" fill="none"/>
<path d="M3.2 10.4 A5 5 0 0 1 10.4 3.2" stroke="#1f2d40" stroke-width="1.1" fill="none"/>

</svg>
<div class="t" style="left:349.00px;transform-origin:0 0;top:404px;font-size:13.8px;color:#000;transform:scaleX(0.935);">Gruppe</div>
<div class="b" style="left:411px;top:398px;width:200px;height:22px;background:#efeaef;border-top:2px solid #5a7492;border-left:2px solid #5a7492;border-right:1px solid #cbcbcb;border-bottom:1px solid #cbcbcb;border-radius:2px;box-shadow:1px 1px 0 #fbfbfb;"></div>
<div class="b" style="left:611px;top:398px;width:200px;height:22px;background:#efeaef;border-top:2px solid #5a7492;border-left:2px solid #5a7492;border-right:1px solid #cbcbcb;border-bottom:1px solid #cbcbcb;border-radius:2px;box-shadow:1px 1px 0 #fbfbfb;"></div>
<div class="b" style="left:811px;top:398px;width:199px;height:22px;background:#efeaef;border-top:2px solid #5a7492;border-left:2px solid #5a7492;border-right:1px solid #cbcbcb;border-bottom:1px solid #cbcbcb;border-radius:2px;box-shadow:1px 1px 0 #fbfbfb;"></div>
<div class="b" style="left:1039px;top:403px;width:11px;height:11px;background:#fff;border-top:1px solid #1f2d40;border-left:1px solid #1f2d40;border-right:1px solid #e6e6e6;border-bottom:1px solid #e6e6e6;box-shadow:1px 1px 0 #fafafa;"></div>
<div class="b" style="left:8px;top:422px;width:181px;height:22px;background:#efeaef;border-top:2px solid #5a7492;border-left:2px solid #5a7492;border-right:1px solid #cbcbcb;border-bottom:1px solid #cbcbcb;border-radius:2px;box-shadow:1px 1px 0 #fbfbfb;"></div>
<div class="t" style="left:9.30px;transform-origin:0 0;top:427px;font-size:13.8px;color:#000;transform:scaleX(0.935);">1453</div>
<div class="b" style="left:191px;top:422px;width:49px;height:22px;background:#efeaef;border-top:2px solid #5a7492;border-left:2px solid #5a7492;border-right:1px solid #cbcbcb;border-bottom:1px solid #cbcbcb;border-radius:2px;box-shadow:1px 1px 0 #fbfbfb;"></div>
<div class="t" style="left:189.50px;width:49.00px;text-align:center;transform-origin:50% 0;top:427px;font-size:13.8px;color:#000;transform:scaleX(0.935);">1</div>
<svg class="b" style="left:259.50px;top:426.30px" width="14" height="14" viewBox="0 0 14 14">
<circle cx="7" cy="7" r="5" fill="#fff"/>
<path d="M11.1 2.9 A5.8 5.8 0 0 1 2.9 11.1" stroke="#fafafa" stroke-width="1" fill="none"/>
<path d="M3.2 10.4 A5 5 0 0 1 10.4 3.2" stroke="#1f2d40" stroke-width="1.1" fill="none"/>
<circle cx="7" cy="7" r="2.9" fill="#26344a"/>
</svg>
<div class="t" style="left:274.20px;transform-origin:0 0;top:428px;font-size:13.8px;color:#000;transform:scaleX(0.935);">Immer</div>
<svg class="b" style="left:334.50px;top:426.30px" width="14" height="14" viewBox="0 0 14 14">
<circle cx="7" cy="7" r="5" fill="#fff"/>
<path d="M11.1 2.9 A5.8 5.8 0 0 1 2.9 11.1" stroke="#fafafa" stroke-width="1" fill="none"/>
<path d="M3.2 10.4 A5 5 0 0 1 10.4 3.2" stroke="#1f2d40" stroke-width="1.1" fill="none"/>

</svg>
<div class="t" style="left:349.00px;transform-origin:0 0;top:428px;font-size:13.8px;color:#000;transform:scaleX(0.935);">Gruppe</div>
<div class="b" style="left:411px;top:422px;width:200px;height:22px;background:#efeaef;border-top:2px solid #5a7492;border-left:2px solid #5a7492;border-right:1px solid #cbcbcb;border-bottom:1px solid #cbcbcb;border-radius:2px;box-shadow:1px 1px 0 #fbfbfb;"></div>
<div class="b" style="left:611px;top:422px;width:200px;height:22px;background:#efeaef;border-top:2px solid #5a7492;border-left:2px solid #5a7492;border-right:1px solid #cbcbcb;border-bottom:1px solid #cbcbcb;border-radius:2px;box-shadow:1px 1px 0 #fbfbfb;"></div>
<div class="b" style="left:811px;top:422px;width:199px;height:22px;background:#efeaef;border-top:2px solid #5a7492;border-left:2px solid #5a7492;border-right:1px solid #cbcbcb;border-bottom:1px solid #cbcbcb;border-radius:2px;box-shadow:1px 1px 0 #fbfbfb;"></div>
<div class="b" style="left:1039px;top:427px;width:11px;height:11px;background:#fff;border-top:1px solid #1f2d40;border-left:1px solid #1f2d40;border-right:1px solid #e6e6e6;border-bottom:1px solid #e6e6e6;box-shadow:1px 1px 0 #fafafa;"></div>
<div class="b" style="left:8px;top:445px;width:181px;height:22px;background:#efeaef;border-top:2px solid #5a7492;border-left:2px solid #5a7492;border-right:1px solid #cbcbcb;border-bottom:1px solid #cbcbcb;border-radius:2px;box-shadow:1px 1px 0 #fbfbfb;"></div>
<div class="t" style="left:9.30px;transform-origin:0 0;top:450px;font-size:13.8px;color:#000;transform:scaleX(0.935);">1451</div>
<div class="b" style="left:191px;top:445px;width:49px;height:22px;background:#efeaef;border-top:2px solid #5a7492;border-left:2px solid #5a7492;border-right:1px solid #cbcbcb;border-bottom:1px solid #cbcbcb;border-radius:2px;box-shadow:1px 1px 0 #fbfbfb;"></div>
<div class="t" style="left:189.50px;width:49.00px;text-align:center;transform-origin:50% 0;top:450px;font-size:13.8px;color:#000;transform:scaleX(0.935);">1</div>
<svg class="b" style="left:259.50px;top:449.30px" width="14" height="14" viewBox="0 0 14 14">
<circle cx="7" cy="7" r="5" fill="#fff"/>
<path d="M11.1 2.9 A5.8 5.8 0 0 1 2.9 11.1" stroke="#fafafa" stroke-width="1" fill="none"/>
<path d="M3.2 10.4 A5 5 0 0 1 10.4 3.2" stroke="#1f2d40" stroke-width="1.1" fill="none"/>
<circle cx="7" cy="7" r="2.9" fill="#26344a"/>
</svg>
<div class="t" style="left:274.20px;transform-origin:0 0;top:451px;font-size:13.8px;color:#000;transform:scaleX(0.935);">Immer</div>
<svg class="b" style="left:334.50px;top:449.30px" width="14" height="14" viewBox="0 0 14 14">
<circle cx="7" cy="7" r="5" fill="#fff"/>
<path d="M11.1 2.9 A5.8 5.8 0 0 1 2.9 11.1" stroke="#fafafa" stroke-width="1" fill="none"/>
<path d="M3.2 10.4 A5 5 0 0 1 10.4 3.2" stroke="#1f2d40" stroke-width="1.1" fill="none"/>

</svg>
<div class="t" style="left:349.00px;transform-origin:0 0;top:451px;font-size:13.8px;color:#000;transform:scaleX(0.935);">Gruppe</div>
<div class="b" style="left:411px;top:445px;width:200px;height:22px;background:#efeaef;border-top:2px solid #5a7492;border-left:2px solid #5a7492;border-right:1px solid #cbcbcb;border-bottom:1px solid #cbcbcb;border-radius:2px;box-shadow:1px 1px 0 #fbfbfb;"></div>
<div class="b" style="left:611px;top:445px;width:200px;height:22px;background:#efeaef;border-top:2px solid #5a7492;border-left:2px solid #5a7492;border-right:1px solid #cbcbcb;border-bottom:1px solid #cbcbcb;border-radius:2px;box-shadow:1px 1px 0 #fbfbfb;"></div>
<div class="b" style="left:811px;top:445px;width:199px;height:22px;background:#efeaef;border-top:2px solid #5a7492;border-left:2px solid #5a7492;border-right:1px solid #cbcbcb;border-bottom:1px solid #cbcbcb;border-radius:2px;box-shadow:1px 1px 0 #fbfbfb;"></div>
<div class="b" style="left:1039px;top:450px;width:11px;height:11px;background:#fff;border-top:1px solid #1f2d40;border-left:1px solid #1f2d40;border-right:1px solid #e6e6e6;border-bottom:1px solid #e6e6e6;box-shadow:1px 1px 0 #fafafa;"></div>
<div class="b" style="left:8px;top:468px;width:181px;height:22px;background:#efeaef;border-top:2px solid #5a7492;border-left:2px solid #5a7492;border-right:1px solid #cbcbcb;border-bottom:1px solid #cbcbcb;border-radius:2px;box-shadow:1px 1px 0 #fbfbfb;"></div>
<div class="t" style="left:9.30px;transform-origin:0 0;top:473px;font-size:13.8px;color:#000;transform:scaleX(0.935);">1423</div>
<div class="b" style="left:191px;top:468px;width:49px;height:22px;background:#efeaef;border-top:2px solid #5a7492;border-left:2px solid #5a7492;border-right:1px solid #cbcbcb;border-bottom:1px solid #cbcbcb;border-radius:2px;box-shadow:1px 1px 0 #fbfbfb;"></div>
<div class="t" style="left:189.50px;width:49.00px;text-align:center;transform-origin:50% 0;top:473px;font-size:13.8px;color:#000;transform:scaleX(0.935);">1</div>
<svg class="b" style="left:259.50px;top:472.30px" width="14" height="14" viewBox="0 0 14 14">
<circle cx="7" cy="7" r="5" fill="#fff"/>
<path d="M11.1 2.9 A5.8 5.8 0 0 1 2.9 11.1" stroke="#fafafa" stroke-width="1" fill="none"/>
<path d="M3.2 10.4 A5 5 0 0 1 10.4 3.2" stroke="#1f2d40" stroke-width="1.1" fill="none"/>
<circle cx="7" cy="7" r="2.9" fill="#26344a"/>
</svg>
<div class="t" style="left:274.20px;transform-origin:0 0;top:474px;font-size:13.8px;color:#000;transform:scaleX(0.935);">Immer</div>
<svg class="b" style="left:334.50px;top:472.30px" width="14" height="14" viewBox="0 0 14 14">
<circle cx="7" cy="7" r="5" fill="#fff"/>
<path d="M11.1 2.9 A5.8 5.8 0 0 1 2.9 11.1" stroke="#fafafa" stroke-width="1" fill="none"/>
<path d="M3.2 10.4 A5 5 0 0 1 10.4 3.2" stroke="#1f2d40" stroke-width="1.1" fill="none"/>

</svg>
<div class="t" style="left:349.00px;transform-origin:0 0;top:474px;font-size:13.8px;color:#000;transform:scaleX(0.935);">Gruppe</div>
<div class="b" style="left:411px;top:468px;width:200px;height:22px;background:#efeaef;border-top:2px solid #5a7492;border-left:2px solid #5a7492;border-right:1px solid #cbcbcb;border-bottom:1px solid #cbcbcb;border-radius:2px;box-shadow:1px 1px 0 #fbfbfb;"></div>
<div class="b" style="left:611px;top:468px;width:200px;height:22px;background:#efeaef;border-top:2px solid #5a7492;border-left:2px solid #5a7492;border-right:1px solid #cbcbcb;border-bottom:1px solid #cbcbcb;border-radius:2px;box-shadow:1px 1px 0 #fbfbfb;"></div>
<div class="b" style="left:811px;top:468px;width:199px;height:22px;background:#efeaef;border-top:2px solid #5a7492;border-left:2px solid #5a7492;border-right:1px solid #cbcbcb;border-bottom:1px solid #cbcbcb;border-radius:2px;box-shadow:1px 1px 0 #fbfbfb;"></div>
<div class="b" style="left:1039px;top:473px;width:11px;height:11px;background:#fff;border-top:1px solid #1f2d40;border-left:1px solid #1f2d40;border-right:1px solid #e6e6e6;border-bottom:1px solid #e6e6e6;box-shadow:1px 1px 0 #fafafa;"></div>
<div class="b" style="left:8px;top:492px;width:181px;height:22px;background:#efeaef;border-top:2px solid #5a7492;border-left:2px solid #5a7492;border-right:1px solid #cbcbcb;border-bottom:1px solid #cbcbcb;border-radius:2px;box-shadow:1px 1px 0 #fbfbfb;"></div>
<div class="t" style="left:9.30px;transform-origin:0 0;top:497px;font-size:13.8px;color:#000;transform:scaleX(0.935);">1422</div>
<div class="b" style="left:191px;top:492px;width:49px;height:22px;background:#efeaef;border-top:2px solid #5a7492;border-left:2px solid #5a7492;border-right:1px solid #cbcbcb;border-bottom:1px solid #cbcbcb;border-radius:2px;box-shadow:1px 1px 0 #fbfbfb;"></div>
<div class="t" style="left:189.50px;width:49.00px;text-align:center;transform-origin:50% 0;top:497px;font-size:13.8px;color:#000;transform:scaleX(0.935);">1</div>
<svg class="b" style="left:259.50px;top:496.30px" width="14" height="14" viewBox="0 0 14 14">
<circle cx="7" cy="7" r="5" fill="#fff"/>
<path d="M11.1 2.9 A5.8 5.8 0 0 1 2.9 11.1" stroke="#fafafa" stroke-width="1" fill="none"/>
<path d="M3.2 10.4 A5 5 0 0 1 10.4 3.2" stroke="#1f2d40" stroke-width="1.1" fill="none"/>
<circle cx="7" cy="7" r="2.9" fill="#26344a"/>
</svg>
<div class="t" style="left:274.20px;transform-origin:0 0;top:498px;font-size:13.8px;color:#000;transform:scaleX(0.935);">Immer</div>
<svg class="b" style="left:334.50px;top:496.30px" width="14" height="14" viewBox="0 0 14 14">
<circle cx="7" cy="7" r="5" fill="#fff"/>
<path d="M11.1 2.9 A5.8 5.8 0 0 1 2.9 11.1" stroke="#fafafa" stroke-width="1" fill="none"/>
<path d="M3.2 10.4 A5 5 0 0 1 10.4 3.2" stroke="#1f2d40" stroke-width="1.1" fill="none"/>

</svg>
<div class="t" style="left:349.00px;transform-origin:0 0;top:498px;font-size:13.8px;color:#000;transform:scaleX(0.935);">Gruppe</div>
<div class="b" style="left:411px;top:492px;width:200px;height:22px;background:#efeaef;border-top:2px solid #5a7492;border-left:2px solid #5a7492;border-right:1px solid #cbcbcb;border-bottom:1px solid #cbcbcb;border-radius:2px;box-shadow:1px 1px 0 #fbfbfb;"></div>
<div class="b" style="left:611px;top:492px;width:200px;height:22px;background:#efeaef;border-top:2px solid #5a7492;border-left:2px solid #5a7492;border-right:1px solid #cbcbcb;border-bottom:1px solid #cbcbcb;border-radius:2px;box-shadow:1px 1px 0 #fbfbfb;"></div>
<div class="b" style="left:811px;top:492px;width:199px;height:22px;background:#efeaef;border-top:2px solid #5a7492;border-left:2px solid #5a7492;border-right:1px solid #cbcbcb;border-bottom:1px solid #cbcbcb;border-radius:2px;box-shadow:1px 1px 0 #fbfbfb;"></div>
<div class="b" style="left:1039px;top:497px;width:11px;height:11px;background:#fff;border-top:1px solid #1f2d40;border-left:1px solid #1f2d40;border-right:1px solid #e6e6e6;border-bottom:1px solid #e6e6e6;box-shadow:1px 1px 0 #fafafa;"></div>
<div class="b" style="left:8px;top:515px;width:181px;height:22px;background:#efeaef;border-top:2px solid #5a7492;border-left:2px solid #5a7492;border-right:1px solid #cbcbcb;border-bottom:1px solid #cbcbcb;border-radius:2px;box-shadow:1px 1px 0 #fbfbfb;"></div>
<div class="t" style="left:9.30px;transform-origin:0 0;top:520px;font-size:13.8px;color:#000;transform:scaleX(0.935);">97</div>
<div class="b" style="left:191px;top:515px;width:49px;height:22px;background:#efeaef;border-top:2px solid #5a7492;border-left:2px solid #5a7492;border-right:1px solid #cbcbcb;border-bottom:1px solid #cbcbcb;border-radius:2px;box-shadow:1px 1px 0 #fbfbfb;"></div>
<div class="t" style="left:189.50px;width:49.00px;text-align:center;transform-origin:50% 0;top:520px;font-size:13.8px;color:#000;transform:scaleX(0.935);">1</div>
<svg class="b" style="left:259.50px;top:519.30px" width="14" height="14" viewBox="0 0 14 14">
<circle cx="7" cy="7" r="5" fill="#fff"/>
<path d="M11.1 2.9 A5.8 5.8 0 0 1 2.9 11.1" stroke="#fafafa" stroke-width="1" fill="none"/>
<path d="M3.2 10.4 A5 5 0 0 1 10.4 3.2" stroke="#1f2d40" stroke-width="1.1" fill="none"/>
<circle cx="7" cy="7" r="2.9" fill="#26344a"/>
</svg>
<div class="t" style="left:274.20px;transform-origin:0 0;top:521px;font-size:13.8px;color:#000;transform:scaleX(0.935);">Immer</div>
<svg class="b" style="left:334.50px;top:519.30px" width="14" height="14" viewBox="0 0 14 14">
<circle cx="7" cy="7" r="5" fill="#fff"/>
<path d="M11.1 2.9 A5.8 5.8 0 0 1 2.9 11.1" stroke="#fafafa" stroke-width="1" fill="none"/>
<path d="M3.2 10.4 A5 5 0 0 1 10.4 3.2" stroke="#1f2d40" stroke-width="1.1" fill="none"/>

</svg>
<div class="t" style="left:349.00px;transform-origin:0 0;top:521px;font-size:13.8px;color:#000;transform:scaleX(0.935);">Gruppe</div>
<div class="b" style="left:411px;top:515px;width:200px;height:22px;background:#efeaef;border-top:2px solid #5a7492;border-left:2px solid #5a7492;border-right:1px solid #cbcbcb;border-bottom:1px solid #cbcbcb;border-radius:2px;box-shadow:1px 1px 0 #fbfbfb;"></div>
<div class="b" style="left:611px;top:515px;width:200px;height:22px;background:#efeaef;border-top:2px solid #5a7492;border-left:2px solid #5a7492;border-right:1px solid #cbcbcb;border-bottom:1px solid #cbcbcb;border-radius:2px;box-shadow:1px 1px 0 #fbfbfb;"></div>
<div class="b" style="left:811px;top:515px;width:199px;height:22px;background:#efeaef;border-top:2px solid #5a7492;border-left:2px solid #5a7492;border-right:1px solid #cbcbcb;border-bottom:1px solid #cbcbcb;border-radius:2px;box-shadow:1px 1px 0 #fbfbfb;"></div>
<div class="b" style="left:1039px;top:520px;width:11px;height:11px;background:#fff;border-top:1px solid #1f2d40;border-left:1px solid #1f2d40;border-right:1px solid #e6e6e6;border-bottom:1px solid #e6e6e6;box-shadow:1px 1px 0 #fafafa;"></div>
<div class="b" style="left:8px;top:538px;width:181px;height:22px;background:#efeaef;border-top:2px solid #5a7492;border-left:2px solid #5a7492;border-right:1px solid #cbcbcb;border-bottom:1px solid #cbcbcb;border-radius:2px;box-shadow:1px 1px 0 #fbfbfb;"></div>
<div class="t" style="left:9.30px;transform-origin:0 0;top:543px;font-size:13.8px;color:#000;transform:scaleX(0.935);">84</div>
<div class="b" style="left:191px;top:538px;width:49px;height:22px;background:#efeaef;border-top:2px solid #5a7492;border-left:2px solid #5a7492;border-right:1px solid #cbcbcb;border-bottom:1px solid #cbcbcb;border-radius:2px;box-shadow:1px 1px 0 #fbfbfb;"></div>
<div class="t" style="left:189.50px;width:49.00px;text-align:center;transform-origin:50% 0;top:543px;font-size:13.8px;color:#000;transform:scaleX(0.935);">1</div>
<svg class="b" style="left:259.50px;top:542.30px" width="14" height="14" viewBox="0 0 14 14">
<circle cx="7" cy="7" r="5" fill="#fff"/>
<path d="M11.1 2.9 A5.8 5.8 0 0 1 2.9 11.1" stroke="#fafafa" stroke-width="1" fill="none"/>
<path d="M3.2 10.4 A5 5 0 0 1 10.4 3.2" stroke="#1f2d40" stroke-width="1.1" fill="none"/>
<circle cx="7" cy="7" r="2.9" fill="#26344a"/>
</svg>
<div class="t" style="left:274.20px;transform-origin:0 0;top:544px;font-size:13.8px;color:#000;transform:scaleX(0.935);">Immer</div>
<svg class="b" style="left:334.50px;top:542.30px" width="14" height="14" viewBox="0 0 14 14">
<circle cx="7" cy="7" r="5" fill="#fff"/>
<path d="M11.1 2.9 A5.8 5.8 0 0 1 2.9 11.1" stroke="#fafafa" stroke-width="1" fill="none"/>
<path d="M3.2 10.4 A5 5 0 0 1 10.4 3.2" stroke="#1f2d40" stroke-width="1.1" fill="none"/>

</svg>
<div class="t" style="left:349.00px;transform-origin:0 0;top:544px;font-size:13.8px;color:#000;transform:scaleX(0.935);">Gruppe</div>
<div class="b" style="left:411px;top:538px;width:200px;height:22px;background:#efeaef;border-top:2px solid #5a7492;border-left:2px solid #5a7492;border-right:1px solid #cbcbcb;border-bottom:1px solid #cbcbcb;border-radius:2px;box-shadow:1px 1px 0 #fbfbfb;"></div>
<div class="b" style="left:611px;top:538px;width:200px;height:22px;background:#efeaef;border-top:2px solid #5a7492;border-left:2px solid #5a7492;border-right:1px solid #cbcbcb;border-bottom:1px solid #cbcbcb;border-radius:2px;box-shadow:1px 1px 0 #fbfbfb;"></div>
<div class="b" style="left:811px;top:538px;width:199px;height:22px;background:#efeaef;border-top:2px solid #5a7492;border-left:2px solid #5a7492;border-right:1px solid #cbcbcb;border-bottom:1px solid #cbcbcb;border-radius:2px;box-shadow:1px 1px 0 #fbfbfb;"></div>
<div class="b" style="left:1039px;top:543px;width:11px;height:11px;background:#fff;border-top:1px solid #1f2d40;border-left:1px solid #1f2d40;border-right:1px solid #e6e6e6;border-bottom:1px solid #e6e6e6;box-shadow:1px 1px 0 #fafafa;"></div>
<div class="b" style="left:8px;top:562px;width:181px;height:22px;background:#efeaef;border-top:2px solid #5a7492;border-left:2px solid #5a7492;border-right:1px solid #cbcbcb;border-bottom:1px solid #cbcbcb;border-radius:2px;box-shadow:1px 1px 0 #fbfbfb;"></div>
<div class="t" style="left:9.30px;transform-origin:0 0;top:567px;font-size:13.8px;color:#000;transform:scaleX(0.935);">888123</div>
<div class="b" style="left:191px;top:562px;width:49px;height:22px;background:#efeaef;border-top:2px solid #5a7492;border-left:2px solid #5a7492;border-right:1px solid #cbcbcb;border-bottom:1px solid #cbcbcb;border-radius:2px;box-shadow:1px 1px 0 #fbfbfb;"></div>
<div class="t" style="left:189.50px;width:49.00px;text-align:center;transform-origin:50% 0;top:567px;font-size:13.8px;color:#000;transform:scaleX(0.935);">1</div>
<svg class="b" style="left:259.50px;top:566.30px" width="14" height="14" viewBox="0 0 14 14">
<circle cx="7" cy="7" r="5" fill="#fff"/>
<path d="M11.1 2.9 A5.8 5.8 0 0 1 2.9 11.1" stroke="#fafafa" stroke-width="1" fill="none"/>
<path d="M3.2 10.4 A5 5 0 0 1 10.4 3.2" stroke="#1f2d40" stroke-width="1.1" fill="none"/>
<circle cx="7" cy="7" r="2.9" fill="#26344a"/>
</svg>
<div class="t" style="left:274.20px;transform-origin:0 0;top:568px;font-size:13.8px;color:#000;transform:scaleX(0.935);">Immer</div>
<svg class="b" style="left:334.50px;top:566.30px" width="14" height="14" viewBox="0 0 14 14">
<circle cx="7" cy="7" r="5" fill="#fff"/>
<path d="M11.1 2.9 A5.8 5.8 0 0 1 2.9 11.1" stroke="#fafafa" stroke-width="1" fill="none"/>
<path d="M3.2 10.4 A5 5 0 0 1 10.4 3.2" stroke="#1f2d40" stroke-width="1.1" fill="none"/>

</svg>
<div class="t" style="left:349.00px;transform-origin:0 0;top:568px;font-size:13.8px;color:#000;transform:scaleX(0.935);">Gruppe</div>
<div class="b" style="left:411px;top:562px;width:200px;height:22px;background:#efeaef;border-top:2px solid #5a7492;border-left:2px solid #5a7492;border-right:1px solid #cbcbcb;border-bottom:1px solid #cbcbcb;border-radius:2px;box-shadow:1px 1px 0 #fbfbfb;"></div>
<div class="b" style="left:611px;top:562px;width:200px;height:22px;background:#efeaef;border-top:2px solid #5a7492;border-left:2px solid #5a7492;border-right:1px solid #cbcbcb;border-bottom:1px solid #cbcbcb;border-radius:2px;box-shadow:1px 1px 0 #fbfbfb;"></div>
<div class="b" style="left:811px;top:562px;width:199px;height:22px;background:#efeaef;border-top:2px solid #5a7492;border-left:2px solid #5a7492;border-right:1px solid #cbcbcb;border-bottom:1px solid #cbcbcb;border-radius:2px;box-shadow:1px 1px 0 #fbfbfb;"></div>
<div class="b" style="left:1039px;top:567px;width:11px;height:11px;background:#fff;border-top:1px solid #1f2d40;border-left:1px solid #1f2d40;border-right:1px solid #e6e6e6;border-bottom:1px solid #e6e6e6;box-shadow:1px 1px 0 #fafafa;"></div>
<svg class="b" style="left:1066px;top:210px" width="15" height="377" viewBox="0 0 15 377">
<path d="M0.5 368.5 V8 A7 7 0 0 1 14.5 8 V368.5 A7 7 0 0 1 0.5 368.5 Z" fill="#d2d2d2" stroke="#a4a4a4" stroke-width="1"/>
<path d="M0.5 15 V8 A7 7 0 0 1 14.5 8 V15" fill="none" stroke="#8fa3b9" stroke-width="1"/>
<path d="M1.8 9 A5.7 5.7 0 0 1 13.2 9" fill="none" stroke="#fff" stroke-width="1"/>
<rect x="1" y="15" width="13" height="1.6" fill="#5f7896"/>
<rect x="1" y="16.6" width="13" height="288" fill="#d0d0d0"/>
<rect x="1" y="16.6" width="1" height="288" fill="#fff"/>
<rect x="1" y="304" width="13" height="56" fill="#b2b2b2"/>
<rect x="1" y="303.6" width="13" height="1.2" fill="#6f86a2"/>
<path d="M3.8 11 L11.2 11 L7.5 7 Z" fill="#5a7492"/>
<rect x="1" y="360" width="13" height="1" fill="#fff"/>
<path d="M0.5 361 V368.5 A7 7 0 0 0 14.5 368.5 V361" fill="none" stroke="#8fa3b9" stroke-width="1"/>
<path d="M3.8 365.5 L11.2 365.5 L7.5 369.5 Z" fill="#5a7492"/>
</svg>
<div class="b" style="left:1075px;top:325px;width:2px;height:2px;background:#fafafa;"></div>
<div class="b" style="left:1076px;top:327px;width:1px;height:1px;background:#7890aa;"></div>
<div class="b" style="left:1077px;top:326px;width:1px;height:1px;background:#7890aa;"></div>
<div class="b" style="left:1075px;top:333px;width:2px;height:2px;background:#fafafa;"></div>
<div class="b" style="left:1076px;top:335px;width:1px;height:1px;background:#7890aa;"></div>
<div class="b" style="left:1077px;top:334px;width:1px;height:1px;background:#7890aa;"></div>
<div class="b" style="left:1075px;top:341px;width:2px;height:2px;background:#fafafa;"></div>
<div class="b" style="left:1076px;top:343px;width:1px;height:1px;background:#7890aa;"></div>
<div class="b" style="left:1077px;top:342px;width:1px;height:1px;background:#7890aa;"></div>
<div class="b" style="left:1075px;top:349px;width:2px;height:2px;background:#fafafa;"></div>
<div class="b" style="left:1076px;top:351px;width:1px;height:1px;background:#7890aa;"></div>
<div class="b" style="left:1077px;top:350px;width:1px;height:1px;background:#7890aa;"></div>
<div class="b" style="left:1075px;top:357px;width:2px;height:2px;background:#fafafa;"></div>
<div class="b" style="left:1076px;top:359px;width:1px;height:1px;background:#7890aa;"></div>
<div class="b" style="left:1077px;top:358px;width:1px;height:1px;background:#7890aa;"></div>
<div class="b" style="left:1075px;top:365px;width:2px;height:2px;background:#fafafa;"></div>
<div class="b" style="left:1076px;top:367px;width:1px;height:1px;background:#7890aa;"></div>
<div class="b" style="left:1077px;top:366px;width:1px;height:1px;background:#7890aa;"></div>
<div class="b" style="left:1075px;top:373px;width:2px;height:2px;background:#fafafa;"></div>
<div class="b" style="left:1076px;top:375px;width:1px;height:1px;background:#7890aa;"></div>
<div class="b" style="left:1077px;top:374px;width:1px;height:1px;background:#7890aa;"></div>
<div class="b" style="left:1075px;top:381px;width:2px;height:2px;background:#fafafa;"></div>
<div class="b" style="left:1076px;top:383px;width:1px;height:1px;background:#7890aa;"></div>
<div class="b" style="left:1077px;top:382px;width:1px;height:1px;background:#7890aa;"></div>
<div class="b" style="left:1075px;top:389px;width:2px;height:2px;background:#fafafa;"></div>
<div class="b" style="left:1076px;top:391px;width:1px;height:1px;background:#7890aa;"></div>
<div class="b" style="left:1077px;top:390px;width:1px;height:1px;background:#7890aa;"></div>
<div class="b" style="left:1075px;top:397px;width:2px;height:2px;background:#fafafa;"></div>
<div class="b" style="left:1076px;top:399px;width:1px;height:1px;background:#7890aa;"></div>
<div class="b" style="left:1077px;top:398px;width:1px;height:1px;background:#7890aa;"></div>
<div class="b" style="left:1070px;top:329px;width:2px;height:2px;background:#fafafa;"></div>
<div class="b" style="left:1071px;top:331px;width:1px;height:1px;background:#7890aa;"></div>
<div class="b" style="left:1072px;top:330px;width:1px;height:1px;background:#7890aa;"></div>
<div class="b" style="left:1070px;top:337px;width:2px;height:2px;background:#fafafa;"></div>
<div class="b" style="left:1071px;top:339px;width:1px;height:1px;background:#7890aa;"></div>
<div class="b" style="left:1072px;top:338px;width:1px;height:1px;background:#7890aa;"></div>
<div class="b" style="left:1070px;top:345px;width:2px;height:2px;background:#fafafa;"></div>
<div class="b" style="left:1071px;top:347px;width:1px;height:1px;background:#7890aa;"></div>
<div class="b" style="left:1072px;top:346px;width:1px;height:1px;background:#7890aa;"></div>
<div class="b" style="left:1070px;top:353px;width:2px;height:2px;background:#fafafa;"></div>
<div class="b" style="left:1071px;top:355px;width:1px;height:1px;background:#7890aa;"></div>
<div class="b" style="left:1072px;top:354px;width:1px;height:1px;background:#7890aa;"></div>
<div class="b" style="left:1070px;top:361px;width:2px;height:2px;background:#fafafa;"></div>
<div class="b" style="left:1071px;top:363px;width:1px;height:1px;background:#7890aa;"></div>
<div class="b" style="left:1072px;top:362px;width:1px;height:1px;background:#7890aa;"></div>
<div class="b" style="left:1070px;top:369px;width:2px;height:2px;background:#fafafa;"></div>
<div class="b" style="left:1071px;top:371px;width:1px;height:1px;background:#7890aa;"></div>
<div class="b" style="left:1072px;top:370px;width:1px;height:1px;background:#7890aa;"></div>
<div class="b" style="left:1070px;top:377px;width:2px;height:2px;background:#fafafa;"></div>
<div class="b" style="left:1071px;top:379px;width:1px;height:1px;background:#7890aa;"></div>
<div class="b" style="left:1072px;top:378px;width:1px;height:1px;background:#7890aa;"></div>
<div class="b" style="left:1070px;top:385px;width:2px;height:2px;background:#fafafa;"></div>
<div class="b" style="left:1071px;top:387px;width:1px;height:1px;background:#7890aa;"></div>
<div class="b" style="left:1072px;top:386px;width:1px;height:1px;background:#7890aa;"></div>
<div class="b" style="left:1070px;top:393px;width:2px;height:2px;background:#fafafa;"></div>
<div class="b" style="left:1071px;top:395px;width:1px;height:1px;background:#7890aa;"></div>
<div class="b" style="left:1072px;top:394px;width:1px;height:1px;background:#7890aa;"></div>
<div class="t" style="left:-16.50px;width:120px;text-align:right;transform-origin:100% 0;top:625px;font-size:13.8px;color:#000;transform:scaleX(0.935);">Modell-Gruppe</div>
<div class="t" style="left:-16.50px;width:120px;text-align:right;transform-origin:100% 0;top:648px;font-size:13.8px;color:#000;transform:scaleX(0.935);">Modell</div>
<div class="t" style="left:-16.50px;width:120px;text-align:right;transform-origin:100% 0;top:672px;font-size:13.8px;color:#000;transform:scaleX(0.935);">Typ</div>
<div class="b" style="left:113px;top:621px;width:65px;height:22px;background:#efeaef;border-top:2px solid #5a7492;border-left:2px solid #5a7492;border-right:1px solid #cbcbcb;border-bottom:1px solid #cbcbcb;border-radius:2px;box-shadow:1px 1px 0 #fbfbfb;"></div>
<div class="b" style="left:180px;top:621px;width:214px;height:22px;background:#efeaef;border-top:2px solid #5a7492;border-left:2px solid #5a7492;border-right:1px solid #cbcbcb;border-bottom:1px solid #cbcbcb;border-radius:2px;box-shadow:1px 1px 0 #fbfbfb;"></div>
<div class="b" style="left:113px;top:645px;width:65px;height:22px;background:#efeaef;border-top:2px solid #5a7492;border-left:2px solid #5a7492;border-right:1px solid #cbcbcb;border-bottom:1px solid #cbcbcb;border-radius:2px;box-shadow:1px 1px 0 #fbfbfb;"></div>
<div class="t" style="left:114.00px;transform-origin:0 0;top:649px;font-size:13.8px;color:#000;transform:scaleX(0.935);">9999</div>
<div class="b" style="left:180px;top:645px;width:214px;height:22px;background:#efeaef;border-top:2px solid #5a7492;border-left:2px solid #5a7492;border-right:1px solid #cbcbcb;border-bottom:1px solid #cbcbcb;border-radius:2px;box-shadow:1px 1px 0 #fbfbfb;"></div>
<div class="t" style="left:181.00px;transform-origin:0 0;top:649px;font-size:13.8px;color:#000;transform:scaleX(0.935);">MATERIAL</div>
<div class="b" style="left:113px;top:668px;width:65px;height:22px;background:#efeaef;border-top:2px solid #5a7492;border-left:2px solid #5a7492;border-right:1px solid #cbcbcb;border-bottom:1px solid #cbcbcb;border-radius:2px;box-shadow:1px 1px 0 #fbfbfb;"></div>
<div class="t" style="left:114.00px;transform-origin:0 0;top:673px;font-size:13.8px;color:#000;transform:scaleX(0.935);">9999</div>
<div class="b" style="left:180px;top:668px;width:214px;height:22px;background:#efeaef;border-top:2px solid #5a7492;border-left:2px solid #5a7492;border-right:1px solid #cbcbcb;border-bottom:1px solid #cbcbcb;border-radius:2px;box-shadow:1px 1px 0 #fbfbfb;"></div>
<div class="t" style="left:181.00px;transform-origin:0 0;top:673px;font-size:13.8px;color:#000;transform:scaleX(0.935);">Material</div>
<div class="t" style="left:410.00px;transform-origin:0 0;top:625px;font-size:13.8px;color:#000;transform:scaleX(0.935);">Bezeichnung1</div>
<div class="t" style="left:410.00px;transform-origin:0 0;top:648px;font-size:13.8px;color:#000;transform:scaleX(0.935);">Bezeichnung2</div>
<div class="b" style="left:501px;top:622px;width:232px;height:21px;background:#efeaef;border-top:2px solid #5a7492;border-left:2px solid #5a7492;border-right:1px solid #cbcbcb;border-bottom:1px solid #cbcbcb;border-radius:2px;box-shadow:1px 1px 0 #fbfbfb;"></div>
<div class="t" style="left:502.50px;transform-origin:0 0;top:626px;font-size:13.8px;color:#000;transform:scaleX(0.935);">KL weiß</div>
<div class="b" style="left:501px;top:645px;width:232px;height:22px;background:#efeaef;border-top:2px solid #5a7492;border-left:2px solid #5a7492;border-right:1px solid #cbcbcb;border-bottom:1px solid #cbcbcb;border-radius:2px;box-shadow:1px 1px 0 #fbfbfb;"></div>
<div class="b" style="left:738px;top:621px;width:485px;height:81px;border-top:1px solid #8a9db2;border-left:1px solid #8a9db2;border-right:1px solid #fff;border-bottom:1px solid #fff;box-shadow:inset -1px -1px 0 #8a9db2, inset 1px 1px 0 #fff;"></div>
<svg class="b" style="left:740.00px;top:628.00px" width="14" height="14" viewBox="0 0 14 14">
<circle cx="7" cy="7" r="5" fill="#fff"/>
<path d="M11.1 2.9 A5.8 5.8 0 0 1 2.9 11.1" stroke="#fafafa" stroke-width="1" fill="none"/>
<path d="M3.2 10.4 A5 5 0 0 1 10.4 3.2" stroke="#1f2d40" stroke-width="1.1" fill="none"/>
<circle cx="7" cy="7" r="2.9" fill="#26344a"/>
</svg>
<div class="t" style="left:755.40px;transform-origin:0 0;top:630px;font-size:13.8px;color:#000;transform:scaleX(0.935);">Neu</div>
<svg class="b" style="left:740.00px;top:653.00px" width="14" height="14" viewBox="0 0 14 14">
<circle cx="7" cy="7" r="5" fill="#fff"/>
<path d="M11.1 2.9 A5.8 5.8 0 0 1 2.9 11.1" stroke="#fafafa" stroke-width="1" fill="none"/>
<path d="M3.2 10.4 A5 5 0 0 1 10.4 3.2" stroke="#1f2d40" stroke-width="1.1" fill="none"/>

</svg>
<div class="t" style="left:755.40px;transform-origin:0 0;top:654px;font-size:13.8px;color:#000;transform:scaleX(0.935);">Entfernen</div>
<div class="b" style="left:842px;top:634px;width:82px;height:21px;background:#fff;border:2px solid #5a7492;border-radius:3px;box-shadow:1px 1px 0 #fbfbfb;"></div>
<div class="b" style="left:909px;top:636px;width:13px;height:17px;background:#c8c8c8;"></div>
<svg class="b" style="left:910.70px;top:641.50px" width="10" height="6"><path d="M1 1 L9 1 L5 5 Z" fill="#5a7494"/></svg>
<div class="t" style="left:847.00px;transform-origin:0 0;top:638px;font-size:13.8px;color:#000;transform:scaleX(0.935);">Kunde</div>
<div class="b" style="left:925px;top:633px;width:66px;height:22px;background:#fff;border-top:2px solid #5a7492;border-left:2px solid #5a7492;border-right:1px solid #cbcbcb;border-bottom:1px solid #cbcbcb;border-radius:2px;box-shadow:1px 1px 0 #fbfbfb;"></div>
<div class="t" style="left:924.00px;width:66px;text-align:right;transform-origin:100% 0;top:638px;font-size:13.8px;color:#000;transform:scaleX(0.935);">12503</div>
<div class="b" style="left:992px;top:633px;width:199px;height:22px;background:#fff;border-top:2px solid #5a7492;border-left:2px solid #5a7492;border-right:1px solid #cbcbcb;border-bottom:1px solid #cbcbcb;border-radius:2px;box-shadow:1px 1px 0 #fbfbfb;"></div>
<div class="t" style="left:993.50px;transform-origin:0 0;top:638px;font-size:13.8px;color:#000;transform:scaleX(0.935);">FALLJE</div>
<div class="b" style="left:1193px;top:635px;width:21px;height:20px;background:#c5c3c6;border-top:1px solid #fff;border-left:1px solid #fff;border-right:1px solid #7f93aa;border-bottom:1px solid #7f93aa;border-radius:2px;"></div>
<svg class="b" style="left:1196.50px;top:637.00px" width="14" height="14" viewBox="0 0 14 14">
<rect x="0" y="0.5" width="9" height="1.6" fill="#000"/>
<rect x="0" y="1.5" width="1.2" height="7" fill="#1d6e9c"/>
<rect x="1.2" y="2.1" width="7.8" height="6" fill="#fff"/>
<rect x="2" y="3.5" width="10.5" height="1.6" fill="#000"/>
<rect x="2" y="4" width="1.2" height="9" fill="#000"/>
<rect x="3.2" y="5.1" width="8" height="7.2" fill="#fff"/>
<rect x="11.2" y="5.1" width="1.3" height="8" fill="#1d6e9c"/>
<rect x="3.2" y="12.2" width="9.3" height="1" fill="#1d6e9c"/>
<rect x="11.3" y="6" width="1" height="1.5" fill="#000"/>
<path d="M4.3 7 L6.3 8.7 L4.3 10.4 Z" fill="#1b2bd8"/>
<rect x="7.3" y="6.4" width="2.4" height="1.1" fill="#e01010"/>
<rect x="7.3" y="8.2" width="2.4" height="1.1" fill="#e01010"/>
<rect x="7.3" y="10" width="2.4" height="1.1" fill="#e01010"/>
</svg>
<div class="t" style="left:766.50px;width:150px;text-align:right;transform-origin:100% 0;top:677px;font-size:13.8px;color:#000;transform:scaleX(0.935);">Gültig von - bis</div>
<div class="b" style="left:925px;top:673px;width:82px;height:22px;background:#fff;border-top:2px solid #5a7492;border-left:2px solid #5a7492;border-right:1px solid #cbcbcb;border-bottom:1px solid #cbcbcb;border-radius:2px;box-shadow:1px 1px 0 #fbfbfb;"></div>
<div class="t" style="left:927.00px;transform-origin:0 0;top:678px;font-size:13.8px;color:#000;transform:scaleX(0.95);">02.05.2023</div>
<div class="b" style="left:1009px;top:673px;width:82px;height:22px;background:#fff;border-top:2px solid #5a7492;border-left:2px solid #5a7492;border-right:1px solid #cbcbcb;border-bottom:1px solid #cbcbcb;border-radius:2px;box-shadow:1px 1px 0 #fbfbfb;"></div>
<div class="t" style="left:1011.00px;transform-origin:0 0;top:678px;font-size:13.8px;color:#000;transform:scaleX(0.95);">31.12.2023</div>
<div class="b" style="left:1151px;top:672px;width:63px;height:25px;background:#c5c3c6;border-top:1px solid #fff;border-left:1px solid #fff;border-right:2px solid #7c91aa;border-bottom:2px solid #7c91aa;border-radius:3px;"></div>
<div class="t" style="left:1151.00px;width:63.00px;text-align:center;transform-origin:50% 0;top:678px;font-size:13.8px;color:#000;transform:scaleX(0.935);"><u>O</u>k</div>
</div></body></html>
